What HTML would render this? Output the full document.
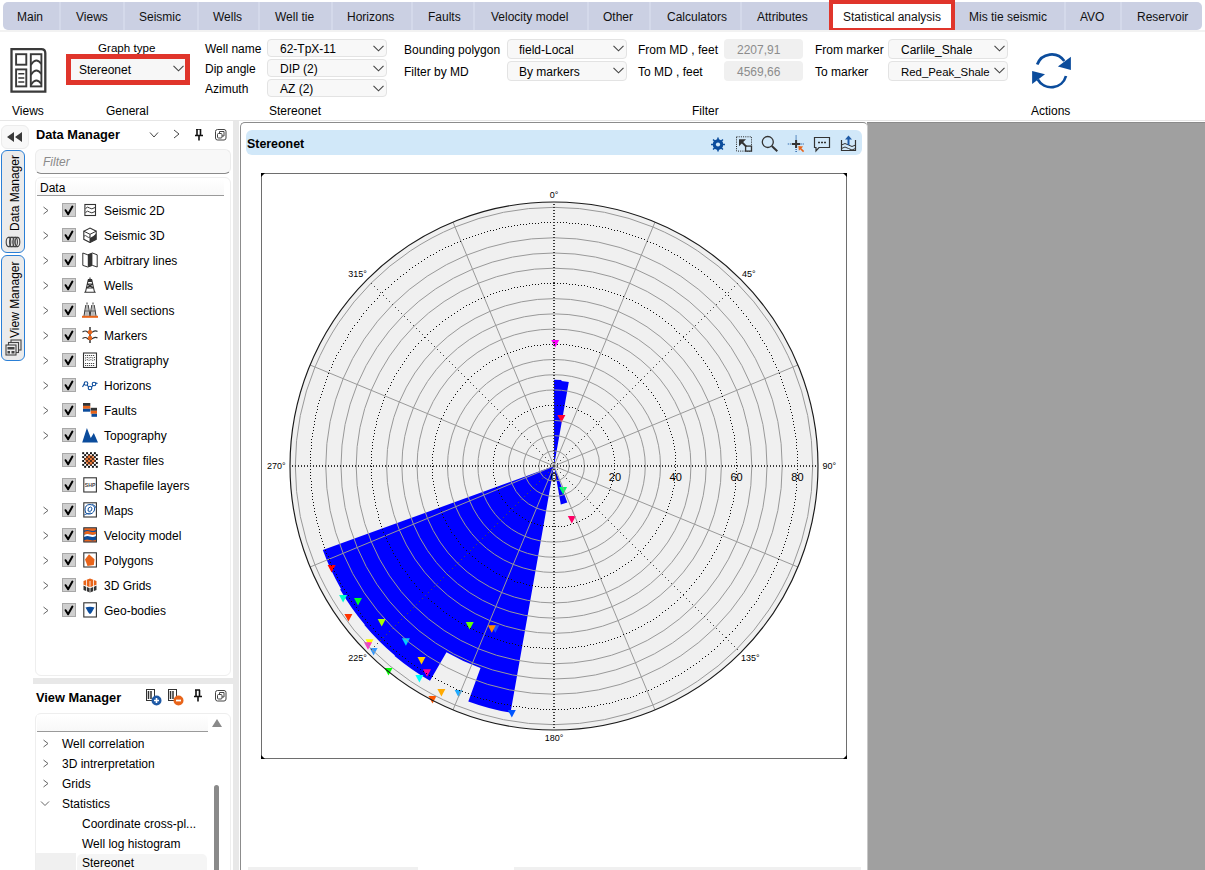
<!DOCTYPE html>
<html><head><meta charset="utf-8">
<style>
*{box-sizing:border-box}
body{margin:0;width:1205px;height:870px;position:relative;overflow:hidden;background:#fff;font-family:"Liberation Sans",sans-serif;font-size:12px;color:#000}
.a{position:absolute}
.t{position:absolute;white-space:nowrap;line-height:1}
.tabs{left:3px;top:2px;width:1199px;height:28px;background:#cbd0e3;border-radius:5px}
.sep{position:absolute;top:0;width:2px;height:28px;background:#d4d9ea}
.tab{position:absolute;top:10px;white-space:nowrap;line-height:14px;font-size:12px;color:#111}
.combo{position:absolute;background:#f8f8f8;border:1px solid #e3e3e3;border-radius:4px}
.combo .v{position:absolute;top:2px;line-height:14px;white-space:nowrap}
.chv{position:absolute}
.spin{position:absolute;background:#f0f0f0;border-radius:4px;color:#8c8c8c}
.lbl{position:absolute;white-space:nowrap;line-height:14px}
.row{position:absolute;height:20px}
.cb{position:absolute;width:14px;height:14px;background:#cfcfcf;border:1px solid #a8a8a8}
.cb svg{position:absolute;left:-1px;top:-1px}
.tc{position:absolute;width:6px;height:6px;border-right:1px solid #666;border-bottom:1px solid #666;transform:rotate(-45deg)}
</style></head><body>

<!-- TAB STRIP -->
<div class="a tabs">
  <div class="sep" style="left:56px"></div>
  <div class="sep" style="left:120px"></div>
  <div class="sep" style="left:194px"></div>
  <div class="sep" style="left:255px"></div>
  <div class="sep" style="left:328px"></div>
  <div class="sep" style="left:408px"></div>
  <div class="sep" style="left:470px"></div>
  <div class="sep" style="left:584px"></div>
  <div class="sep" style="left:646px"></div>
  <div class="sep" style="left:737px"></div>
  <div class="sep" style="left:1061px"></div>
  <div class="sep" style="left:1117px"></div>
</div>
<div class="tab" style="left:17px">Main</div>
<div class="tab" style="left:76px">Views</div>
<div class="tab" style="left:139px">Seismic</div>
<div class="tab" style="left:213px">Wells</div>
<div class="tab" style="left:275px">Well tie</div>
<div class="tab" style="left:347px">Horizons</div>
<div class="tab" style="left:428px">Faults</div>
<div class="tab" style="left:491px">Velocity model</div>
<div class="tab" style="left:603px">Other</div>
<div class="tab" style="left:667px">Calculators</div>
<div class="tab" style="left:757px">Attributes</div>
<div class="a" style="left:829px;top:0;width:126px;height:32px;background:#fff;border:4px solid #e0352b"></div>
<div class="tab" style="left:843px">Statistical analysis</div>
<div class="tab" style="left:969px">Mis tie seismic</div>
<div class="tab" style="left:1080px">AVO</div>
<div class="tab" style="left:1137px">Reservoir</div>

<!-- RIBBON -->

<div class="a" style="left:0;top:30px;width:1205px;height:2px;background:#f2f2f2"></div>
<!-- views icon -->
<svg class="a" style="left:9px;top:47px" width="39" height="47" viewBox="0 0 39 47">
 <path d="M2.5 2.1 H32.3 Q36.3 2.1 36.3 6.1 V44.6 H2.5 Z" fill="none" stroke="#3a3a3a" stroke-width="2.3"/>
 <rect x="7.1" y="7.2" width="10.2" height="10.5" fill="none" stroke="#3a3a3a" stroke-width="1.9"/>
 <rect x="7.1" y="22.4" width="10.2" height="17" fill="none" stroke="#3a3a3a" stroke-width="1.9"/>
 <path d="M9.3 26.8 h6 M9.3 30.9 h6 M9.3 35 h6" stroke="#3a3a3a" stroke-width="1.5"/>
 <rect x="21.8" y="7.2" width="10.6" height="32.2" fill="none" stroke="#3a3a3a" stroke-width="1.9"/>
 <path d="M21.8 18 Q27 9.5 32.4 17 M21.8 28 Q27 19.5 32.4 27 M21.8 38 Q27 29.5 32.4 37" fill="none" stroke="#3a3a3a" stroke-width="1.9"/>
</svg>
<div class="lbl" style="left:12px;top:104px">Views</div>
<div class="lbl" style="left:98px;top:41px;font-size:11.6px">Graph type</div>
<div class="a" style="left:66px;top:54px;width:124px;height:31px;border:5px solid #e0352b;background:#f7f7f7"></div>
<div class="lbl" style="left:79px;top:63px">Stereonet</div>
<svg class="chv" style="left:173px;top:65px" width="11" height="7" viewBox="0 0 11 7"><path d="M0.5 0.8 L5.5 5.8 L10.5 0.8" fill="none" stroke="#444" stroke-width="1.1"/></svg>
<div class="lbl" style="left:106px;top:104px">General</div>

<div class="lbl" style="left:205px;top:42px">Well name</div>
<div class="lbl" style="left:205px;top:62px">Dip angle</div>
<div class="lbl" style="left:205px;top:82px">Azimuth</div>
<div class="combo" style="left:267px;top:39px;width:120px;height:18px"><div class="v" style="left:12px;top:2px">62-TpX-11</div><svg class="chv" style="left:105px;top:5px" width="11" height="7" viewBox="0 0 11 7"><path d="M0.5 0.8 L5.5 5.8 L10.5 0.8" fill="none" stroke="#444" stroke-width="1.1"/></svg></div>
<div class="combo" style="left:267px;top:59px;width:120px;height:18px"><div class="v" style="left:12px;top:2px">DIP (2)</div><svg class="chv" style="left:105px;top:5px" width="11" height="7" viewBox="0 0 11 7"><path d="M0.5 0.8 L5.5 5.8 L10.5 0.8" fill="none" stroke="#444" stroke-width="1.1"/></svg></div>
<div class="combo" style="left:267px;top:79px;width:120px;height:18px"><div class="v" style="left:12px;top:2px">AZ (2)</div><svg class="chv" style="left:105px;top:5px" width="11" height="7" viewBox="0 0 11 7"><path d="M0.5 0.8 L5.5 5.8 L10.5 0.8" fill="none" stroke="#444" stroke-width="1.1"/></svg></div>
<div class="lbl" style="left:269px;top:104px">Stereonet</div>

<div class="lbl" style="left:404px;top:43px">Bounding polygon</div>
<div class="lbl" style="left:404px;top:65px">Filter by MD</div>
<div class="combo" style="left:507px;top:39px;width:120px;height:20px"><div class="v" style="left:11px;top:3px">field-Local</div><svg class="chv" style="left:105px;top:5px" width="11" height="7" viewBox="0 0 11 7"><path d="M0.5 0.8 L5.5 5.8 L10.5 0.8" fill="none" stroke="#444" stroke-width="1.1"/></svg></div>
<div class="combo" style="left:507px;top:61px;width:120px;height:20px"><div class="v" style="left:11px;top:3px">By markers</div><svg class="chv" style="left:105px;top:5px" width="11" height="7" viewBox="0 0 11 7"><path d="M0.5 0.8 L5.5 5.8 L10.5 0.8" fill="none" stroke="#444" stroke-width="1.1"/></svg></div>

<div class="lbl" style="left:638px;top:43px">From MD , feet</div>
<div class="lbl" style="left:638px;top:65px">To MD , feet</div>
<div class="spin" style="left:724px;top:39px;width:79px;height:20px"><div class="v lbl" style="left:13px;top:4px">2207,91</div></div>
<div class="spin" style="left:724px;top:61px;width:79px;height:20px"><div class="v lbl" style="left:13px;top:4px">4569,66</div></div>

<div class="lbl" style="left:815px;top:43px">From marker</div>
<div class="lbl" style="left:815px;top:65px">To marker</div>
<div class="combo" style="left:888px;top:39px;width:120px;height:20px"><div class="v" style="left:12px;top:3px">Carlile_Shale</div><svg class="chv" style="left:105px;top:5px" width="11" height="7" viewBox="0 0 11 7"><path d="M0.5 0.8 L5.5 5.8 L10.5 0.8" fill="none" stroke="#444" stroke-width="1.1"/></svg></div>
<div class="combo" style="left:888px;top:61px;width:120px;height:20px"><div class="v" style="left:12px;top:3px;font-size:11.4px">Red_Peak_Shale</div><svg class="chv" style="left:105px;top:5px" width="11" height="7" viewBox="0 0 11 7"><path d="M0.5 0.8 L5.5 5.8 L10.5 0.8" fill="none" stroke="#444" stroke-width="1.1"/></svg></div>
<div class="lbl" style="left:692px;top:104px">Filter</div>

<svg class="a" style="left:1020px;top:45px" width="60" height="50" viewBox="0 0 60 50">
 <path d="M17.2 19.5 A15.4 15.4 0 0 1 44.3 16.1" fill="none" stroke="#0b4c9c" stroke-width="2.7"/>
 <path d="M50.9 11.8 L50.9 25 L37.9 21.6 Z" fill="#0b4c9c"/>
 <path d="M46 31 A15.4 15.4 0 0 1 17.8 34.5" fill="none" stroke="#0b4c9c" stroke-width="2.7"/>
 <path d="M12.1 25.9 L12.1 39.1 L25 29.3 Z" fill="#0b4c9c"/>
</svg>
<div class="lbl" style="left:1031px;top:104px">Actions</div>
<div class="a" style="left:0;top:120px;width:1205px;height:1px;background:#e6e6e6"></div>


<!-- LEFT SIDE -->

<div class="a" style="left:1px;top:125px;width:28px;height:24px;background:#f8f8f8;border:1px solid #ececec;border-radius:6px"></div>
<svg class="a" style="left:6px;top:131px" width="18" height="12" viewBox="0 0 18 12"><path d="M1 6 L8 1 V11Z M9 6 L16 1 V11Z" fill="#3a3a3a"/></svg>
<div class="a" style="left:1px;top:150px;width:24px;height:103px;background:#ebebeb;border:1px solid #2a7fd6;border-radius:6px"></div>
<div class="t" style="left:9px;top:231px;transform-origin:0 0;transform:rotate(-90deg);font-size:12px;line-height:12px">Data Manager</div>
<svg class="a" style="left:5px;top:236px" width="16" height="12" viewBox="0 0 16 12"><g fill="none" stroke="#444" stroke-width="1.1"><ellipse cx="3.5" cy="6" rx="2.3" ry="4.6"/><ellipse cx="6.8" cy="6" rx="2.3" ry="4.6"/><ellipse cx="10.1" cy="6" rx="2.3" ry="4.6"/><path d="M3.5 1.4 H12.5 M3.5 10.6 H12.5"/><ellipse cx="12.5" cy="6" rx="2.3" ry="4.6"/></g></svg>
<div class="a" style="left:1px;top:255px;width:24px;height:106px;background:#ebebeb;border:1px solid #2a7fd6;border-radius:6px"></div>
<div class="t" style="left:9px;top:338px;transform-origin:0 0;transform:rotate(-90deg);font-size:12px;line-height:12px">View Manager</div>
<svg class="a" style="left:4px;top:339px" width="19" height="18" viewBox="0 0 19 18"><g fill="#ebebeb" stroke="#444" stroke-width="1.1"><rect x="7" y="1" width="10" height="10"/><rect x="4.5" y="3.5" width="10" height="10"/><rect x="2" y="6" width="10" height="10"/></g><path d="M3.5 8 H10.5 V10.5 H3.5Z" fill="#444"/><path d="M3.5 12 H6 V14.5 H3.5Z M7.5 12 H10.5 V14.5 H7.5Z" fill="#444"/></svg>

<div class="t" style="left:36px;top:128px;font-weight:bold;font-size:12.8px;line-height:14px">Data Manager</div>
<svg class="a" style="left:148px;top:129px" width="85" height="12" viewBox="0 0 85 12">
 <path d="M2 3.5 L6 8 L10 3.5" fill="none" stroke="#444" stroke-width="1"/>
 <path d="M26 1 L31 5 L26 9" fill="none" stroke="#444" stroke-width="1"/>
 <path d="M48 0 H53 M49 0 V6 M52.5 0 V6 M47 6.5 H55 M51 6.5 V11.5" fill="none" stroke="#111" stroke-width="1.6"/>
 <rect x="67.5" y="0.5" width="10.5" height="10.5" rx="2" fill="none" stroke="#444" stroke-width="1"/>
 <rect x="69.5" y="4.5" width="4.5" height="4.5" rx="1" fill="none" stroke="#444" stroke-width="1"/>
 <path d="M71.5 4.5 V2.5 H76 V7 H74" fill="none" stroke="#444" stroke-width="1"/>
</svg>
<div class="a" style="left:35px;top:149px;width:196px;height:25px;background:#f8f8f8;border:1px solid #ececec;border-bottom:1.5px solid #8a8a8a;border-radius:6px"></div>
<div class="t" style="left:43px;top:156px;font-style:italic;color:#8a8a8a">Filter</div>
<div class="a" style="left:35px;top:177px;width:196px;height:499px;background:#fff;border:1px solid #eeeeee;border-radius:6px"></div>
<div class="a" style="left:37px;top:179px;width:187px;height:17px;background:linear-gradient(#fff,#f8f8f8);border-bottom:1px solid #9a9a9a"></div>
<div class="t" style="left:40px;top:182px">Data</div>
<svg class="a" style="left:42px;top:206px" width="8" height="9" viewBox="0 0 8 9"><path d="M1.5 1 L6 4.5 L1.5 8" fill="none" stroke="#666" stroke-width="1"/></svg>
<div class="cb" style="left:62px;top:203px"><svg width="14" height="14" viewBox="0 0 14 14"><path d="M3.6 7.2 L6.1 11.3 L10.4 3.6" fill="none" stroke="#000" stroke-width="2" stroke-linecap="round" stroke-linejoin="round"/></svg></div>
<svg class="a" style="left:82px;top:202px" width="16" height="16" viewBox="0 0 16 16"><rect x="2.9" y="2.5" width="10.6" height="11" fill="#fff" stroke="#333" stroke-width="1.1"/><path d="M3.5 6.5 q2 -2.5 4 -0.5 t5.5 -0.5 M3.5 10.5 q2 -2.5 4 -0.5 t5.5 -0.5" fill="none" stroke="#333" stroke-width="1"/></svg>
<div class="t" style="left:104px;top:205px">Seismic 2D</div>
<svg class="a" style="left:42px;top:231px" width="8" height="9" viewBox="0 0 8 9"><path d="M1.5 1 L6 4.5 L1.5 8" fill="none" stroke="#666" stroke-width="1"/></svg>
<div class="cb" style="left:62px;top:228px"><svg width="14" height="14" viewBox="0 0 14 14"><path d="M3.6 7.2 L6.1 11.3 L10.4 3.6" fill="none" stroke="#000" stroke-width="2" stroke-linecap="round" stroke-linejoin="round"/></svg></div>
<svg class="a" style="left:82px;top:227px" width="16" height="16" viewBox="0 0 16 16"><path d="M1.8 4.2 L8 1 L14.2 4.2 V12.3 L8 15.5 L1.8 12.3 Z" fill="#fff" stroke="#333" stroke-width="1.1"/><path d="M1.8 4.2 L8 7.3 L14.2 4.2 M8 7.3 V15.5" fill="none" stroke="#333" stroke-width="1"/><path d="M8 11 q3 -1 6.2 -4.5 V12.3 L8 15.5Z" fill="#333"/><path d="M2 9 q2 -1 3 0.5 t3 0.5" fill="none" stroke="#333" stroke-width="0.9"/></svg>
<div class="t" style="left:104px;top:230px">Seismic 3D</div>
<svg class="a" style="left:42px;top:256px" width="8" height="9" viewBox="0 0 8 9"><path d="M1.5 1 L6 4.5 L1.5 8" fill="none" stroke="#666" stroke-width="1"/></svg>
<div class="cb" style="left:62px;top:253px"><svg width="14" height="14" viewBox="0 0 14 14"><path d="M3.6 7.2 L6.1 11.3 L10.4 3.6" fill="none" stroke="#000" stroke-width="2" stroke-linecap="round" stroke-linejoin="round"/></svg></div>
<svg class="a" style="left:82px;top:252px" width="16" height="16" viewBox="0 0 16 16"><path d="M0.8 1 L5.8 2.8 L10.4 1 L15.2 2.8 V15 L10.4 13.4 L5.8 15 L0.8 13.4 Z" fill="#fff" stroke="#333" stroke-width="1"/><path d="M5.8 2.8 L10.4 1 V13.4 L5.8 15 Z" fill="#333"/></svg>
<div class="t" style="left:104px;top:255px">Arbitrary lines</div>
<svg class="a" style="left:42px;top:281px" width="8" height="9" viewBox="0 0 8 9"><path d="M1.5 1 L6 4.5 L1.5 8" fill="none" stroke="#666" stroke-width="1"/></svg>
<div class="cb" style="left:62px;top:278px"><svg width="14" height="14" viewBox="0 0 14 14"><path d="M3.6 7.2 L6.1 11.3 L10.4 3.6" fill="none" stroke="#000" stroke-width="2" stroke-linecap="round" stroke-linejoin="round"/></svg></div>
<svg class="a" style="left:82px;top:277px" width="16" height="16" viewBox="0 0 16 16"><path d="M8 0.5 V2.5 M6 2.5 H10 M6.3 2.5 L3.5 15 M9.7 2.5 L12.5 15 M2.3 15.3 H13.7 M5.2 7 H10.8 M4.4 11 H11.6 M5.2 7 L11.6 11 M10.8 7 L4.4 11" fill="none" stroke="#333" stroke-width="1.1"/><rect x="6" y="3" width="4" height="2" fill="#333"/></svg>
<div class="t" style="left:104px;top:280px">Wells</div>
<svg class="a" style="left:42px;top:306px" width="8" height="9" viewBox="0 0 8 9"><path d="M1.5 1 L6 4.5 L1.5 8" fill="none" stroke="#666" stroke-width="1"/></svg>
<div class="cb" style="left:62px;top:303px"><svg width="14" height="14" viewBox="0 0 14 14"><path d="M3.6 7.2 L6.1 11.3 L10.4 3.6" fill="none" stroke="#000" stroke-width="2" stroke-linecap="round" stroke-linejoin="round"/></svg></div>
<svg class="a" style="left:82px;top:302px" width="16" height="16" viewBox="0 0 16 16"><path d="M5 0.5 V2.5 M3.8 3 L2 14 M6.2 3 L8 14 M11 0.5 V2.5 M9.8 3 L8 14 M12.2 3 L14 14 M2.7 9 H7.3 M8.7 9 H13.3" fill="none" stroke="#333" stroke-width="1"/><path d="M3.8 3 H6.2 L7 14 H3Z M9.8 3 H12.2 L13 14 H9Z" fill="#888" opacity="0.6"/><rect x="0" y="13.8" width="16" height="2" fill="#e8641a"/></svg>
<div class="t" style="left:104px;top:305px">Well sections</div>
<svg class="a" style="left:42px;top:331px" width="8" height="9" viewBox="0 0 8 9"><path d="M1.5 1 L6 4.5 L1.5 8" fill="none" stroke="#666" stroke-width="1"/></svg>
<div class="cb" style="left:62px;top:328px"><svg width="14" height="14" viewBox="0 0 14 14"><path d="M3.6 7.2 L6.1 11.3 L10.4 3.6" fill="none" stroke="#000" stroke-width="2" stroke-linecap="round" stroke-linejoin="round"/></svg></div>
<svg class="a" style="left:82px;top:327px" width="16" height="16" viewBox="0 0 16 16"><path d="M8 0 V16" stroke="#333" stroke-width="1.5"/><path d="M0.5 5 q3 -2 5 0 t5 0 t5 -0.5 M0.5 11.5 q3 -2 5 0 t5 0 t5 -0.5" fill="none" stroke="#333" stroke-width="1.1"/><circle cx="8" cy="5.2" r="2.2" fill="#e8641a"/><circle cx="8" cy="11" r="2.2" fill="#e8641a"/></svg>
<div class="t" style="left:104px;top:330px">Markers</div>
<svg class="a" style="left:42px;top:356px" width="8" height="9" viewBox="0 0 8 9"><path d="M1.5 1 L6 4.5 L1.5 8" fill="none" stroke="#666" stroke-width="1"/></svg>
<div class="cb" style="left:62px;top:353px"><svg width="14" height="14" viewBox="0 0 14 14"><path d="M3.6 7.2 L6.1 11.3 L10.4 3.6" fill="none" stroke="#000" stroke-width="2" stroke-linecap="round" stroke-linejoin="round"/></svg></div>
<svg class="a" style="left:82px;top:352px" width="16" height="16" viewBox="0 0 16 16"><rect x="1.5" y="1" width="13" height="14.5" fill="#fff" stroke="#333" stroke-width="1.1"/><path d="M3 3.5 h10 M3 6.2 l2 -1 l2 1 l2 -1 l2 1 l2 -1 M3 8.5 l2 -1 l2 1 l2 -1 l2 1 l2 -1 M3 11.5 h10 M3 13.5 h10" fill="none" stroke="#333" stroke-width="0.9" stroke-dasharray="1.2 0.8"/></svg>
<div class="t" style="left:104px;top:355px">Stratigraphy</div>
<svg class="a" style="left:42px;top:381px" width="8" height="9" viewBox="0 0 8 9"><path d="M1.5 1 L6 4.5 L1.5 8" fill="none" stroke="#666" stroke-width="1"/></svg>
<div class="cb" style="left:62px;top:378px"><svg width="14" height="14" viewBox="0 0 14 14"><path d="M3.6 7.2 L6.1 11.3 L10.4 3.6" fill="none" stroke="#000" stroke-width="2" stroke-linecap="round" stroke-linejoin="round"/></svg></div>
<svg class="a" style="left:82px;top:377px" width="16" height="16" viewBox="0 0 16 16"><path d="M0.5 10 Q3 4 5.5 8.5 Q8 13 10.5 9 Q13 5 15.5 6.5" fill="none" stroke="#0b4c9c" stroke-width="1.1"/><circle cx="4" cy="6.5" r="1.8" fill="#fff" stroke="#0b4c9c" stroke-width="1.1"/><circle cx="8" cy="11" r="1.8" fill="#fff" stroke="#0b4c9c" stroke-width="1.1"/><circle cx="12" cy="7" r="1.8" fill="#fff" stroke="#0b4c9c" stroke-width="1.1"/></svg>
<div class="t" style="left:104px;top:380px">Horizons</div>
<svg class="a" style="left:42px;top:406px" width="8" height="9" viewBox="0 0 8 9"><path d="M1.5 1 L6 4.5 L1.5 8" fill="none" stroke="#666" stroke-width="1"/></svg>
<div class="cb" style="left:62px;top:403px"><svg width="14" height="14" viewBox="0 0 14 14"><path d="M3.6 7.2 L6.1 11.3 L10.4 3.6" fill="none" stroke="#000" stroke-width="2" stroke-linecap="round" stroke-linejoin="round"/></svg></div>
<svg class="a" style="left:82px;top:402px" width="16" height="16" viewBox="0 0 16 16"><rect x="1" y="1" width="7.3" height="2.9" fill="#333"/><rect x="1" y="3.9" width="7.3" height="2.9" fill="#e8641a"/><rect x="1" y="6.8" width="7.3" height="2.9" fill="#0b4c9c"/><rect x="8.7" y="5.8" width="6.3" height="3" fill="#333"/><rect x="8.7" y="8.8" width="6.3" height="3" fill="#e8641a"/><rect x="9.5" y="11.8" width="5.5" height="3" fill="#0b4c9c"/></svg>
<div class="t" style="left:104px;top:405px">Faults</div>
<svg class="a" style="left:42px;top:431px" width="8" height="9" viewBox="0 0 8 9"><path d="M1.5 1 L6 4.5 L1.5 8" fill="none" stroke="#666" stroke-width="1"/></svg>
<div class="cb" style="left:62px;top:428px"><svg width="14" height="14" viewBox="0 0 14 14"><path d="M3.6 7.2 L6.1 11.3 L10.4 3.6" fill="none" stroke="#000" stroke-width="2" stroke-linecap="round" stroke-linejoin="round"/></svg></div>
<svg class="a" style="left:82px;top:427px" width="16" height="16" viewBox="0 0 16 16"><path d="M0.2 15.5 L4.9 1 L8.8 11 L11.8 6 L16 15.5 Z" fill="#0b4c9c"/></svg>
<div class="t" style="left:104px;top:430px">Topography</div>
<div class="cb" style="left:62px;top:453px"><svg width="14" height="14" viewBox="0 0 14 14"><path d="M3.6 7.2 L6.1 11.3 L10.4 3.6" fill="none" stroke="#000" stroke-width="2" stroke-linecap="round" stroke-linejoin="round"/></svg></div>
<svg class="a" style="left:82px;top:452px" width="16" height="16" viewBox="0 0 16 16"><path d="M0 0h1.6v1.6h-1.6zM3 0h1.6v1.6h-1.6zM6 0h1.6v1.6h-1.6zM9 0h1.6v1.6h-1.6zM12 0h1.6v1.6h-1.6zM15 0h1.6v1.6h-1.6zM0 3h1.6v1.6h-1.6zM3 3h1.6v1.6h-1.6zM6 3h1.6v1.6h-1.6zM9 3h1.6v1.6h-1.6zM12 3h1.6v1.6h-1.6zM15 3h1.6v1.6h-1.6zM0 6h1.6v1.6h-1.6zM3 6h1.6v1.6h-1.6zM6 6h1.6v1.6h-1.6zM9 6h1.6v1.6h-1.6zM12 6h1.6v1.6h-1.6zM15 6h1.6v1.6h-1.6zM0 9h1.6v1.6h-1.6zM3 9h1.6v1.6h-1.6zM6 9h1.6v1.6h-1.6zM9 9h1.6v1.6h-1.6zM12 9h1.6v1.6h-1.6zM15 9h1.6v1.6h-1.6zM0 12h1.6v1.6h-1.6zM3 12h1.6v1.6h-1.6zM6 12h1.6v1.6h-1.6zM9 12h1.6v1.6h-1.6zM12 12h1.6v1.6h-1.6zM15 12h1.6v1.6h-1.6zM0 15h1.6v1.6h-1.6zM3 15h1.6v1.6h-1.6zM6 15h1.6v1.6h-1.6zM9 15h1.6v1.6h-1.6zM12 15h1.6v1.6h-1.6zM15 15h1.6v1.6h-1.6z" fill="none"/><g fill="#111"><rect x="0.20" y="0.20" width="1.95" height="1.95"/><rect x="0.20" y="4.10" width="1.95" height="1.95"/><rect x="0.20" y="8.00" width="1.95" height="1.95"/><rect x="0.20" y="11.90" width="1.95" height="1.95"/><rect x="2.15" y="2.15" width="1.95" height="1.95"/><rect x="2.15" y="6.05" width="1.95" height="1.95"/><rect x="2.15" y="9.95" width="1.95" height="1.95"/><rect x="2.15" y="13.85" width="1.95" height="1.95"/><rect x="4.10" y="0.20" width="1.95" height="1.95"/><rect x="4.10" y="4.10" width="1.95" height="1.95"/><rect x="4.10" y="8.00" width="1.95" height="1.95"/><rect x="4.10" y="11.90" width="1.95" height="1.95"/><rect x="6.05" y="2.15" width="1.95" height="1.95"/><rect x="6.05" y="6.05" width="1.95" height="1.95"/><rect x="6.05" y="9.95" width="1.95" height="1.95"/><rect x="6.05" y="13.85" width="1.95" height="1.95"/><rect x="8.00" y="0.20" width="1.95" height="1.95"/><rect x="8.00" y="4.10" width="1.95" height="1.95"/><rect x="8.00" y="8.00" width="1.95" height="1.95"/><rect x="8.00" y="11.90" width="1.95" height="1.95"/><rect x="9.95" y="2.15" width="1.95" height="1.95"/><rect x="9.95" y="6.05" width="1.95" height="1.95"/><rect x="9.95" y="9.95" width="1.95" height="1.95"/><rect x="9.95" y="13.85" width="1.95" height="1.95"/><rect x="11.90" y="0.20" width="1.95" height="1.95"/><rect x="11.90" y="4.10" width="1.95" height="1.95"/><rect x="11.90" y="8.00" width="1.95" height="1.95"/><rect x="11.90" y="11.90" width="1.95" height="1.95"/><rect x="13.85" y="2.15" width="1.95" height="1.95"/><rect x="13.85" y="6.05" width="1.95" height="1.95"/><rect x="13.85" y="9.95" width="1.95" height="1.95"/><rect x="13.85" y="13.85" width="1.95" height="1.95"/></g><circle cx="8" cy="8" r="4.8" fill="#e8641a" opacity="0.85"/><g fill="#222" opacity="0.7"><rect x="4.10" y="4.10" width="1.95" height="1.95"/><rect x="4.10" y="8.00" width="1.95" height="1.95"/><rect x="6.05" y="6.05" width="1.95" height="1.95"/><rect x="6.05" y="9.95" width="1.95" height="1.95"/><rect x="8.00" y="4.10" width="1.95" height="1.95"/><rect x="8.00" y="8.00" width="1.95" height="1.95"/><rect x="9.95" y="6.05" width="1.95" height="1.95"/><rect x="9.95" y="9.95" width="1.95" height="1.95"/></g></svg>
<div class="t" style="left:104px;top:455px">Raster files</div>
<div class="cb" style="left:62px;top:478px"><svg width="14" height="14" viewBox="0 0 14 14"><path d="M3.6 7.2 L6.1 11.3 L10.4 3.6" fill="none" stroke="#000" stroke-width="2" stroke-linecap="round" stroke-linejoin="round"/></svg></div>
<svg class="a" style="left:82px;top:477px" width="16" height="16" viewBox="0 0 16 16"><rect x="1.8" y="0.8" width="12.6" height="14.2" fill="#fff" stroke="#333" stroke-width="1.1"/><text x="8.1" y="10.2" font-size="5.2" font-weight="bold" text-anchor="middle" font-family="Liberation Sans" fill="#444">SHP</text></svg>
<div class="t" style="left:104px;top:480px">Shapefile layers</div>
<svg class="a" style="left:42px;top:506px" width="8" height="9" viewBox="0 0 8 9"><path d="M1.5 1 L6 4.5 L1.5 8" fill="none" stroke="#666" stroke-width="1"/></svg>
<div class="cb" style="left:62px;top:503px"><svg width="14" height="14" viewBox="0 0 14 14"><path d="M3.6 7.2 L6.1 11.3 L10.4 3.6" fill="none" stroke="#000" stroke-width="2" stroke-linecap="round" stroke-linejoin="round"/></svg></div>
<svg class="a" style="left:82px;top:502px" width="16" height="16" viewBox="0 0 16 16"><rect x="1.8" y="0.8" width="12.6" height="14.2" fill="#fff" stroke="#333" stroke-width="1.1"/><path d="M3 8 Q3 2.5 8 2.5 Q13.5 3 12.5 8 Q11 12.5 6 12 Q3 12 3 8Z M6 9 Q5.5 5 8.5 5 Q11 5.5 9.5 8.5 Q8 10 6 9Z" fill="none" stroke="#0b4c9c" stroke-width="1"/><path d="M2 13 Q6 11 9 11 M10 2 Q14 4 14 6" fill="none" stroke="#0b4c9c" stroke-width="0.8"/></svg>
<div class="t" style="left:104px;top:505px">Maps</div>
<svg class="a" style="left:42px;top:531px" width="8" height="9" viewBox="0 0 8 9"><path d="M1.5 1 L6 4.5 L1.5 8" fill="none" stroke="#666" stroke-width="1"/></svg>
<div class="cb" style="left:62px;top:528px"><svg width="14" height="14" viewBox="0 0 14 14"><path d="M3.6 7.2 L6.1 11.3 L10.4 3.6" fill="none" stroke="#000" stroke-width="2" stroke-linecap="round" stroke-linejoin="round"/></svg></div>
<svg class="a" style="left:82px;top:527px" width="16" height="16" viewBox="0 0 16 16"><rect x="1.8" y="0.8" width="12.6" height="14.2" fill="#0b4c9c" stroke="#333" stroke-width="1.1"/><path d="M2.3 1.3 H13.9 V3 Q11 4.5 8 3.5 Q5 2.5 2.3 3.5Z" fill="#e8641a"/><path d="M2.3 5 Q5 3.5 8 4.5 Q11 5.5 13.9 4.5 V7 Q11 8.5 8 7.5 Q5 6.5 2.3 8Z" fill="#e8641a"/><path d="M2.3 8 Q5 6.5 8 7.5 Q11 8.5 13.9 7 V9 Q11 10.5 8 9.5 Q5 8.5 2.3 10Z" fill="#fff"/><path d="M2.3 13.2 Q5 12 8 13 Q11 14 13.9 12.8 V14.5 H2.3Z" fill="#e8641a"/></svg>
<div class="t" style="left:104px;top:530px">Velocity model</div>
<svg class="a" style="left:42px;top:556px" width="8" height="9" viewBox="0 0 8 9"><path d="M1.5 1 L6 4.5 L1.5 8" fill="none" stroke="#666" stroke-width="1"/></svg>
<div class="cb" style="left:62px;top:553px"><svg width="14" height="14" viewBox="0 0 14 14"><path d="M3.6 7.2 L6.1 11.3 L10.4 3.6" fill="none" stroke="#000" stroke-width="2" stroke-linecap="round" stroke-linejoin="round"/></svg></div>
<svg class="a" style="left:82px;top:552px" width="16" height="16" viewBox="0 0 16 16"><rect x="1.8" y="0.8" width="12.6" height="14.2" fill="#fff" stroke="#333" stroke-width="1.1"/><path d="M7 2.2 L12.5 7.2 L11.8 13 L5.5 14 L3 7.5 Z" fill="#e8641a"/></svg>
<div class="t" style="left:104px;top:555px">Polygons</div>
<svg class="a" style="left:42px;top:581px" width="8" height="9" viewBox="0 0 8 9"><path d="M1.5 1 L6 4.5 L1.5 8" fill="none" stroke="#666" stroke-width="1"/></svg>
<div class="cb" style="left:62px;top:578px"><svg width="14" height="14" viewBox="0 0 14 14"><path d="M3.6 7.2 L6.1 11.3 L10.4 3.6" fill="none" stroke="#000" stroke-width="2" stroke-linecap="round" stroke-linejoin="round"/></svg></div>
<svg class="a" style="left:82px;top:577px" width="16" height="16" viewBox="0 0 16 16"><path d="M1.5 4 L8 1.5 L14.5 4 V8 L8 10.5 L1.5 8 Z" fill="#e8641a"/><path d="M1.5 8.5 L8 11 L14.5 8.5 V13 L8 15.5 L1.5 13 Z" fill="#333"/><path d="M4.5 2.5 V15 M11.5 2.5 V15 M1.5 8.2 L8 10.8 L14.5 8.2 M8 4 V15.5" stroke="#fff" stroke-width="0.8" fill="none"/></svg>
<div class="t" style="left:104px;top:580px">3D Grids</div>
<svg class="a" style="left:42px;top:606px" width="8" height="9" viewBox="0 0 8 9"><path d="M1.5 1 L6 4.5 L1.5 8" fill="none" stroke="#666" stroke-width="1"/></svg>
<div class="cb" style="left:62px;top:603px"><svg width="14" height="14" viewBox="0 0 14 14"><path d="M3.6 7.2 L6.1 11.3 L10.4 3.6" fill="none" stroke="#000" stroke-width="2" stroke-linecap="round" stroke-linejoin="round"/></svg></div>
<svg class="a" style="left:82px;top:602px" width="16" height="16" viewBox="0 0 16 16"><rect x="1.8" y="0.8" width="12.6" height="14.2" fill="#fff" stroke="#333" stroke-width="1.1"/><path d="M3.5 5.5 Q8 4.2 12.5 5.5 Q11 8 10 10 Q8.5 12.5 7.5 11.8 Q6 10.5 5 8 Z" fill="#0b4c9c"/></svg>
<div class="t" style="left:104px;top:605px">Geo-bodies</div>

<div class="a" style="left:33px;top:678px;width:200px;height:6px;background:#e8e8e8"></div>
<div class="a" style="left:233px;top:121px;width:6px;height:749px;background:#e8e8e8"></div>
<div class="t" style="left:36px;top:691px;font-weight:bold;font-size:12.8px;line-height:14px">View Manager</div>
<svg class="a" style="left:145px;top:688px" width="85" height="18" viewBox="0 0 85 18">
 <g fill="#fff" stroke="#333" stroke-width="1"><rect x="1.5" y="1.5" width="8" height="11"/></g><path d="M3.5 3 V11 M6 3 V11" stroke="#333" stroke-width="1.5"/>
 <circle cx="11.5" cy="12.5" r="5" fill="#1f5aa6"/><path d="M9 12.5 H14 M11.5 10 V15" stroke="#fff" stroke-width="1.6"/>
 <g fill="#fff" stroke="#333" stroke-width="1"><rect x="23.5" y="1.5" width="8" height="11"/></g><path d="M25.5 3 V11 M28 3 V11" stroke="#333" stroke-width="1.5"/>
 <circle cx="33.5" cy="12.5" r="5" fill="#e8641a"/><path d="M31 12.5 H36" stroke="#fff" stroke-width="1.8"/>
 <path d="M50 2 H55 M51 2 V8 M54.5 2 V8 M49 8.5 H57 M53 8.5 V13.5" fill="none" stroke="#111" stroke-width="1.6"/>
 <rect x="70.5" y="2.5" width="10.5" height="10.5" rx="2" fill="none" stroke="#444" stroke-width="1"/>
 <rect x="72.5" y="6.5" width="4.5" height="4.5" rx="1" fill="none" stroke="#444" stroke-width="1"/>
 <path d="M74.5 6.5 V4.5 H79 V9 H77" fill="none" stroke="#444" stroke-width="1"/>
</svg>
<div class="a" style="left:35px;top:713px;width:196px;height:170px;background:#fff;border:1px solid #eeeeee;border-radius:6px"></div>
<div class="a" style="left:37px;top:715px;width:171px;height:17px;background:linear-gradient(#fff,#f8f8f8);border-bottom:1px solid #9a9a9a"></div>
<svg class="a" style="left:211px;top:718px" width="12" height="10" viewBox="0 0 12 10"><path d="M1 9 L6 1 L11 9Z" fill="#8a8a8a"/></svg>
<div class="a" style="left:214px;top:785px;width:5px;height:90px;background:#8a8a8a;border-radius:2.5px"></div>
<div class="a" style="left:36px;top:853px;width:40px;height:17px;background:#f0f0f0"></div>
<div class="a" style="left:77px;top:854px;width:130px;height:20px;background:#f5f5f5;border-radius:5px"></div>
<svg class="a" style="left:42px;top:739px" width="8" height="9" viewBox="0 0 8 9"><path d="M1.5 1 L6 4.5 L1.5 8" fill="none" stroke="#666" stroke-width="1"/></svg>
<div class="t" style="left:62px;top:738px">Well correlation</div>
<svg class="a" style="left:42px;top:759px" width="8" height="9" viewBox="0 0 8 9"><path d="M1.5 1 L6 4.5 L1.5 8" fill="none" stroke="#666" stroke-width="1"/></svg>
<div class="t" style="left:62px;top:758px">3D intrerpretation</div>
<svg class="a" style="left:42px;top:779px" width="8" height="9" viewBox="0 0 8 9"><path d="M1.5 1 L6 4.5 L1.5 8" fill="none" stroke="#666" stroke-width="1"/></svg>
<div class="t" style="left:62px;top:778px">Grids</div>
<svg class="a" style="left:40px;top:800px" width="10" height="7" viewBox="0 0 10 7"><path d="M1 1.5 L5 5.5 L9 1.5" fill="none" stroke="#666" stroke-width="1"/></svg>
<div class="t" style="left:62px;top:798px">Statistics</div>
<div class="t" style="left:82px;top:818px">Coordinate cross-pl...</div>
<div class="t" style="left:82px;top:838px">Well log histogram</div>
<div class="t" style="left:82px;top:857px">Stereonet</div>


<!-- VIEW PANEL -->
<div class="a" style="left:867px;top:122px;width:338px;height:748px;background:#a0a0a0;border-top:1px solid #8a8a8a"></div>
<div class="a" style="left:240px;top:122px;width:628px;height:760px;background:#fff;border:1px solid #8c8c8c;border-right-color:#c8c8c8;border-radius:5px 5px 0 0"></div>
<div class="a" style="left:246px;top:130px;width:616px;height:25px;background:#d1e8f9;border-radius:6px"></div>
<div class="t" style="left:247px;top:138px;font-weight:bold;font-size:12.4px;line-height:13px">Stereonet</div>
<svg class="a" style="left:700px;top:130px" width="162" height="25" viewBox="0 0 162 25">
 <g transform="translate(18 14.5)"><path d="M-0.86 -4.93 L-0.71 -6.96 L0.71 -6.96 L0.86 -4.93 L2.88 -4.09 L4.42 -5.43 L5.43 -4.42 L4.09 -2.88 L4.93 -0.86 L6.96 -0.71 L6.96 0.71 L4.93 0.86 L4.09 2.88 L5.43 4.42 L4.42 5.43 L2.88 4.09 L0.86 4.93 L0.71 6.96 L-0.71 6.96 L-0.86 4.93 L-2.88 4.09 L-4.42 5.43 L-5.43 4.42 L-4.09 2.88 L-4.93 0.86 L-6.96 0.71 L-6.96 -0.71 L-4.93 -0.86 L-4.09 -2.88 L-5.43 -4.42 L-4.42 -5.43 L-2.88 -4.09 Z" fill="#0b4c9c"/><circle r="5.2" fill="#0b4c9c"/><circle r="2.1" fill="#d1e8f9"/></g>
 <rect x="36.5" y="6.8" width="15" height="14.3" fill="none" stroke="#222" stroke-width="1" stroke-dasharray="1 1.2"/>
 <rect x="45.6" y="16.1" width="5.9" height="5" fill="#d1e8f9" stroke="#333" stroke-width="1.3"/>
 <path d="M39 9.3 L46 9.3 L39 16.3 Z" fill="#333"/>
 <path d="M41.5 11.8 L46.3 16.6" stroke="#333" stroke-width="2"/>
 <circle cx="67.8" cy="12" r="5.5" fill="none" stroke="#333" stroke-width="1.3"/>
 <path d="M71.8 16 L77.3 21.3" stroke="#333" stroke-width="2"/>
 <path d="M96.1 5.5 V10.5 M96.1 17 V22 M87.8 14 H91.3 M100.7 14 H104.2" stroke="#0b4c9c" stroke-width="1.2" stroke-dasharray="1 1"/>
 <path d="M96.1 10 V18 M91.8 14 H100.2" stroke="#333" stroke-width="2"/>
 <path d="M98.3 16 L103.2 16.6 L98.9 20.7 Z" fill="#e8641a"/>
 <path d="M100 18 L103.6 21.6" stroke="#e8641a" stroke-width="1.6"/>
 <path d="M114.5 7.5 H129.5 V17.5 H119 L116 21 V17.5 H114.5 Z" fill="none" stroke="#333" stroke-width="1.2"/>
 <path d="M118 12.5 h2 M121 12.5 h2 M124 12.5 h2" stroke="#333" stroke-width="1.6"/>
 <path d="M141.5 10 V20.5 H155.5 V10" fill="none" stroke="#333" stroke-width="1.2"/>
 <path d="M141.5 15 q3.5 -3 7 0 t7 0 M141.5 18.5 q3.5 -3 7 0 t7 0" fill="none" stroke="#333" stroke-width="1"/>
 <path d="M148.5 15 V9" stroke="#1f5aa6" stroke-width="2"/>
 <path d="M145 9.5 L148.5 5.5 L152 9.5 Z" fill="#1f5aa6"/>
</svg>
<svg class="a" style="left:0;top:0" width="1205" height="870" viewBox="0 0 1205 870">
<rect x="261.5" y="173.5" width="585" height="585" fill="#fff" stroke="#6e6e6e" stroke-width="1"/>
<path d="M261 173 h4 L261 177 Z" fill="#000"/>
<path d="M847 173 h-4 L847 177 Z" fill="#000"/>
<path d="M261 759 h4 L261 755 Z" fill="#000"/>
<path d="M847 759 h-4 L847 755 Z" fill="#000"/>
<circle cx="554.0" cy="466.0" r="264.0" fill="#f0f0f0"/>
<path d="M554.0 466.0 L510.5 712.7 A250.5 250.5 0 0 1 468.3 701.4 L480.5 668.0 A215.0 215.0 0 0 1 446.5 652.2 L430.0 680.8 A248.0 248.0 0 0 1 394.6 656.0 L394.9 655.6 A247.5 247.5 0 0 1 364.4 625.1 L364.8 624.8 A247.0 247.0 0 0 1 340.1 589.5 L341.0 589.0 A246.0 246.0 0 0 1 322.8 550.1 Z" fill="#0000ff"/>
<path d="M554.0 466.0 L554.0 379.8 A86.2 86.2 0 0 1 561.5 380.1 L561.4 381.1 A85.2 85.2 0 0 1 568.8 382.1 Z" fill="#0000ff"/>
<path d="M554.0 466.0 L567.3 502.6 A39.0 39.0 0 0 1 560.8 504.4 Z" fill="#0000ff"/>
<path d="M551.2 340.1 H559.2 L555.2 347.6 Z" fill="#ff00ff"/>
<path d="M557.4 415.1 H565.4 L561.4 422.6 Z" fill="#ff0033"/>
<path d="M559.1 487.1 H567.1 L563.1 494.6 Z" fill="#00ff66"/>
<path d="M567.8 516.0 H575.8 L571.8 523.5 Z" fill="#ff0066"/>
<path d="M327.6 565.0 H335.6 L331.6 572.5 Z" fill="#ff0000"/>
<path d="M339.1 595.0 H347.1 L343.1 602.5 Z" fill="#00ffcc"/>
<path d="M354.0 598.1 H362.0 L358.0 605.6 Z" fill="#00ff22"/>
<path d="M344.4 614.1 H352.4 L348.4 621.6 Z" fill="#ff3300"/>
<path d="M377.7 619.1 H385.7 L381.7 626.6 Z" fill="#aaff00"/>
<path d="M465.7 622.0 H473.7 L469.7 629.5 Z" fill="#66ff00"/>
<path d="M491.3 625.2 H499.3 L495.3 632.7 Z" fill="#1a4dff"/>
<path d="M487.8 625.2 H495.8 L491.8 632.7 Z" fill="#ff8800"/>
<path d="M401.9 638.2 H409.9 L405.9 645.7 Z" fill="#00ccff"/>
<path d="M365.5 639.3 H373.5 L369.5 646.8 Z" fill="#ffff00"/>
<path d="M364.0 642.2 H372.0 L368.0 649.7 Z" fill="#ff33cc"/>
<path d="M369.6 648.0 H377.6 L373.6 655.5 Z" fill="#3399ff"/>
<path d="M417.5 657.1 H425.5 L421.5 664.6 Z" fill="#ffcc00"/>
<path d="M423.0 669.2 H431.0 L427.0 676.7 Z" fill="#ff0099"/>
<path d="M415.4 675.0 H423.4 L419.4 682.5 Z" fill="#00ffff"/>
<path d="M384.5 668.0 H392.5 L388.5 675.5 Z" fill="#00ff00"/>
<path d="M437.4 689.1 H445.4 L441.4 696.6 Z" fill="#ffaa00"/>
<path d="M428.5 696.0 H436.5 L432.5 703.5 Z" fill="#ff5500"/>
<path d="M454.6 690.0 H462.6 L458.6 697.5 Z" fill="#1eaaff"/>
<path d="M507.8 709.9 H515.8 L511.8 717.4 Z" fill="#0055ff"/>
<g fill="none" stroke="#999999" stroke-width="1"><circle cx="554.0" cy="466.0" r="15.21"/><circle cx="554.0" cy="466.0" r="30.43"/><circle cx="554.0" cy="466.0" r="45.65"/><circle cx="554.0" cy="466.0" r="76.08"/><circle cx="554.0" cy="466.0" r="91.29"/><circle cx="554.0" cy="466.0" r="106.51"/><circle cx="554.0" cy="466.0" r="136.94"/><circle cx="554.0" cy="466.0" r="152.15"/><circle cx="554.0" cy="466.0" r="167.37"/><circle cx="554.0" cy="466.0" r="197.80"/><circle cx="554.0" cy="466.0" r="213.01"/><circle cx="554.0" cy="466.0" r="228.23"/><circle cx="554.0" cy="466.0" r="258.66"/>
<line x1="554.0" y1="466.0" x2="655.0" y2="222.1"/>
<line x1="554.0" y1="466.0" x2="797.9" y2="365.0"/>
<line x1="554.0" y1="466.0" x2="797.9" y2="567.0"/>
<line x1="554.0" y1="466.0" x2="655.0" y2="709.9"/>
<line x1="554.0" y1="466.0" x2="453.0" y2="709.9"/>
<line x1="554.0" y1="466.0" x2="310.1" y2="567.0"/>
<line x1="554.0" y1="466.0" x2="310.1" y2="365.0"/>
<line x1="554.0" y1="466.0" x2="453.0" y2="222.1"/>
</g>
<path d="M554 405h1v1h-1zM557 405h1v1h-1zM560 405h1v1h-1zM563 405h1v1h-1zM566 406h1v1h-1zM569 407h1v1h-1zM572 407h1v1h-1zM575 408h1v1h-1zM578 410h1v1h-1zM581 411h1v1h-1zM584 413h1v1h-1zM587 414h1v1h-1zM590 416h1v1h-1zM593 419h1v1h-1zM596 421h1v1h-1zM598 424h1v1h-1zM601 427h1v1h-1zM603 430h1v1h-1zM605 433h1v1h-1zM607 436h1v1h-1zM608 439h1v1h-1zM610 442h1v1h-1zM611 445h1v1h-1zM612 448h1v1h-1zM613 451h1v1h-1zM613 454h1v1h-1zM614 457h1v1h-1zM614 460h1v1h-1zM614 463h1v1h-1zM614 466h1v1h-1zM614 469h1v1h-1zM614 472h1v1h-1zM614 475h1v1h-1zM613 478h1v1h-1zM612 481h1v1h-1zM611 484h1v1h-1zM610 487h1v1h-1zM609 490h1v1h-1zM608 493h1v1h-1zM606 496h1v1h-1zM604 499h1v1h-1zM602 502h1v1h-1zM599 505h1v1h-1zM597 508h1v1h-1zM594 511h1v1h-1zM591 514h1v1h-1zM588 516h1v1h-1zM585 518h1v1h-1zM582 519h1v1h-1zM579 521h1v1h-1zM576 522h1v1h-1zM573 523h1v1h-1zM570 524h1v1h-1zM567 525h1v1h-1zM564 526h1v1h-1zM561 526h1v1h-1zM558 526h1v1h-1zM555 526h1v1h-1zM552 526h1v1h-1zM549 526h1v1h-1zM546 526h1v1h-1zM543 525h1v1h-1zM540 525h1v1h-1zM537 524h1v1h-1zM534 523h1v1h-1zM531 522h1v1h-1zM528 521h1v1h-1zM525 519h1v1h-1zM522 517h1v1h-1zM519 515h1v1h-1zM516 513h1v1h-1zM513 511h1v1h-1zM510 508h1v1h-1zM507 505h1v1h-1zM505 502h1v1h-1zM502 499h1v1h-1zM501 496h1v1h-1zM499 493h1v1h-1zM498 490h1v1h-1zM496 487h1v1h-1zM495 484h1v1h-1zM495 481h1v1h-1zM494 478h1v1h-1zM493 475h1v1h-1zM493 472h1v1h-1zM493 469h1v1h-1zM493 466h1v1h-1zM493 463h1v1h-1zM493 460h1v1h-1zM493 457h1v1h-1zM494 454h1v1h-1zM494 451h1v1h-1zM495 448h1v1h-1zM496 445h1v1h-1zM498 442h1v1h-1zM499 439h1v1h-1zM500 436h1v1h-1zM502 433h1v1h-1zM504 430h1v1h-1zM507 427h1v1h-1zM509 424h1v1h-1zM512 421h1v1h-1zM515 418h1v1h-1zM518 416h1v1h-1zM521 414h1v1h-1zM524 412h1v1h-1zM527 411h1v1h-1zM530 409h1v1h-1zM533 408h1v1h-1zM536 407h1v1h-1zM539 406h1v1h-1zM542 406h1v1h-1zM545 405h1v1h-1zM548 405h1v1h-1zM551 405h1v1h-1zM554 344h1v1h-1zM557 344h1v1h-1zM560 344h1v1h-1zM563 344h1v1h-1zM566 344h1v1h-1zM569 345h1v1h-1zM572 345h1v1h-1zM575 346h1v1h-1zM578 346h1v1h-1zM581 347h1v1h-1zM584 348h1v1h-1zM587 348h1v1h-1zM590 349h1v1h-1zM593 350h1v1h-1zM596 351h1v1h-1zM599 352h1v1h-1zM602 354h1v1h-1zM605 355h1v1h-1zM608 356h1v1h-1zM611 358h1v1h-1zM614 360h1v1h-1zM617 361h1v1h-1zM619 363h1v1h-1zM623 365h1v1h-1zM626 367h1v1h-1zM628 370h1v1h-1zM632 372h1v1h-1zM635 375h1v1h-1zM637 377h1v1h-1zM640 380h1v1h-1zM643 383h1v1h-1zM646 386h1v1h-1zM648 389h1v1h-1zM651 392h1v1h-1zM653 395h1v1h-1zM655 398h1v1h-1zM657 401h1v1h-1zM659 404h1v1h-1zM660 407h1v1h-1zM662 410h1v1h-1zM664 413h1v1h-1zM665 416h1v1h-1zM666 419h1v1h-1zM667 422h1v1h-1zM668 425h1v1h-1zM669 428h1v1h-1zM670 431h1v1h-1zM671 434h1v1h-1zM672 437h1v1h-1zM673 440h1v1h-1zM673 443h1v1h-1zM674 446h1v1h-1zM674 449h1v1h-1zM675 452h1v1h-1zM675 455h1v1h-1zM675 458h1v1h-1zM675 461h1v1h-1zM675 464h1v1h-1zM675 467h1v1h-1zM675 470h1v1h-1zM675 473h1v1h-1zM675 476h1v1h-1zM674 479h1v1h-1zM674 482h1v1h-1zM674 485h1v1h-1zM673 488h1v1h-1zM672 491h1v1h-1zM672 494h1v1h-1zM671 497h1v1h-1zM670 500h1v1h-1zM669 503h1v1h-1zM668 506h1v1h-1zM667 509h1v1h-1zM666 512h1v1h-1zM665 515h1v1h-1zM663 518h1v1h-1zM662 521h1v1h-1zM660 524h1v1h-1zM658 527h1v1h-1zM656 530h1v1h-1zM655 533h1v1h-1zM652 536h1v1h-1zM650 539h1v1h-1zM648 542h1v1h-1zM645 545h1v1h-1zM643 548h1v1h-1zM640 551h1v1h-1zM637 554h1v1h-1zM634 557h1v1h-1zM631 560h1v1h-1zM628 562h1v1h-1zM625 564h1v1h-1zM622 566h1v1h-1zM619 568h1v1h-1zM616 570h1v1h-1zM613 572h1v1h-1zM610 573h1v1h-1zM607 575h1v1h-1zM604 576h1v1h-1zM601 578h1v1h-1zM598 579h1v1h-1zM595 580h1v1h-1zM592 581h1v1h-1zM589 582h1v1h-1zM586 583h1v1h-1zM583 584h1v1h-1zM580 584h1v1h-1zM577 585h1v1h-1zM574 586h1v1h-1zM571 586h1v1h-1zM568 586h1v1h-1zM565 587h1v1h-1zM562 587h1v1h-1zM559 587h1v1h-1zM556 587h1v1h-1zM553 587h1v1h-1zM550 587h1v1h-1zM547 587h1v1h-1zM544 587h1v1h-1zM541 587h1v1h-1zM538 586h1v1h-1zM535 586h1v1h-1zM532 585h1v1h-1zM529 585h1v1h-1zM526 584h1v1h-1zM523 583h1v1h-1zM520 582h1v1h-1zM517 582h1v1h-1zM514 581h1v1h-1zM511 579h1v1h-1zM508 578h1v1h-1zM505 577h1v1h-1zM502 576h1v1h-1zM499 574h1v1h-1zM496 573h1v1h-1zM493 571h1v1h-1zM490 569h1v1h-1zM487 567h1v1h-1zM484 565h1v1h-1zM481 563h1v1h-1zM478 561h1v1h-1zM475 558h1v1h-1zM472 556h1v1h-1zM469 553h1v1h-1zM466 550h1v1h-1zM463 547h1v1h-1zM460 544h1v1h-1zM458 541h1v1h-1zM456 538h1v1h-1zM454 535h1v1h-1zM451 532h1v1h-1zM450 529h1v1h-1zM448 526h1v1h-1zM446 523h1v1h-1zM445 520h1v1h-1zM443 517h1v1h-1zM442 514h1v1h-1zM441 511h1v1h-1zM439 508h1v1h-1zM438 505h1v1h-1zM437 502h1v1h-1zM436 499h1v1h-1zM436 496h1v1h-1zM435 493h1v1h-1zM434 490h1v1h-1zM434 487h1v1h-1zM433 484h1v1h-1zM433 481h1v1h-1zM432 478h1v1h-1zM432 475h1v1h-1zM432 472h1v1h-1zM432 469h1v1h-1zM432 466h1v1h-1zM432 463h1v1h-1zM432 460h1v1h-1zM432 457h1v1h-1zM432 454h1v1h-1zM433 451h1v1h-1zM433 448h1v1h-1zM434 445h1v1h-1zM434 442h1v1h-1zM435 439h1v1h-1zM435 436h1v1h-1zM436 433h1v1h-1zM437 430h1v1h-1zM438 427h1v1h-1zM439 424h1v1h-1zM440 421h1v1h-1zM441 418h1v1h-1zM443 415h1v1h-1zM444 412h1v1h-1zM446 409h1v1h-1zM447 406h1v1h-1zM449 403h1v1h-1zM451 400h1v1h-1zM453 397h1v1h-1zM455 394h1v1h-1zM457 391h1v1h-1zM460 388h1v1h-1zM462 385h1v1h-1zM465 382h1v1h-1zM468 379h1v1h-1zM471 376h1v1h-1zM474 373h1v1h-1zM477 371h1v1h-1zM480 369h1v1h-1zM483 366h1v1h-1zM486 364h1v1h-1zM489 362h1v1h-1zM492 360h1v1h-1zM495 359h1v1h-1zM498 357h1v1h-1zM501 356h1v1h-1zM504 354h1v1h-1zM507 353h1v1h-1zM510 352h1v1h-1zM513 351h1v1h-1zM516 350h1v1h-1zM519 349h1v1h-1zM522 348h1v1h-1zM525 347h1v1h-1zM528 346h1v1h-1zM531 346h1v1h-1zM534 345h1v1h-1zM537 345h1v1h-1zM540 345h1v1h-1zM543 344h1v1h-1zM546 344h1v1h-1zM549 344h1v1h-1zM552 344h1v1h-1zM554 283h1v1h-1zM557 283h1v1h-1zM560 283h1v1h-1zM563 283h1v1h-1zM566 283h1v1h-1zM569 284h1v1h-1zM572 284h1v1h-1zM575 284h1v1h-1zM578 285h1v1h-1zM581 285h1v1h-1zM584 285h1v1h-1zM587 286h1v1h-1zM590 287h1v1h-1zM593 287h1v1h-1zM596 288h1v1h-1zM599 289h1v1h-1zM602 289h1v1h-1zM605 290h1v1h-1zM608 291h1v1h-1zM611 292h1v1h-1zM614 293h1v1h-1zM617 294h1v1h-1zM620 295h1v1h-1zM623 296h1v1h-1zM626 298h1v1h-1zM629 299h1v1h-1zM632 300h1v1h-1zM635 302h1v1h-1zM638 303h1v1h-1zM641 305h1v1h-1zM644 307h1v1h-1zM647 308h1v1h-1zM650 310h1v1h-1zM653 312h1v1h-1zM656 314h1v1h-1zM659 316h1v1h-1zM662 318h1v1h-1zM665 321h1v1h-1zM668 323h1v1h-1zM671 325h1v1h-1zM674 328h1v1h-1zM676 331h1v1h-1zM679 333h1v1h-1zM683 336h1v1h-1zM685 339h1v1h-1zM688 342h1v1h-1zM691 345h1v1h-1zM694 348h1v1h-1zM696 351h1v1h-1zM698 354h1v1h-1zM701 357h1v1h-1zM703 360h1v1h-1zM705 363h1v1h-1zM707 366h1v1h-1zM709 369h1v1h-1zM711 372h1v1h-1zM712 375h1v1h-1zM714 378h1v1h-1zM716 381h1v1h-1zM717 384h1v1h-1zM718 387h1v1h-1zM720 390h1v1h-1zM721 393h1v1h-1zM722 396h1v1h-1zM724 399h1v1h-1zM725 402h1v1h-1zM726 405h1v1h-1zM727 408h1v1h-1zM728 411h1v1h-1zM729 414h1v1h-1zM730 417h1v1h-1zM730 420h1v1h-1zM731 423h1v1h-1zM732 426h1v1h-1zM732 429h1v1h-1zM733 432h1v1h-1zM734 435h1v1h-1zM734 438h1v1h-1zM734 441h1v1h-1zM735 444h1v1h-1zM735 447h1v1h-1zM735 450h1v1h-1zM736 453h1v1h-1zM736 456h1v1h-1zM736 459h1v1h-1zM736 462h1v1h-1zM736 465h1v1h-1zM736 468h1v1h-1zM736 471h1v1h-1zM736 474h1v1h-1zM736 477h1v1h-1zM735 480h1v1h-1zM735 483h1v1h-1zM735 486h1v1h-1zM735 489h1v1h-1zM734 492h1v1h-1zM734 495h1v1h-1zM733 498h1v1h-1zM733 501h1v1h-1zM732 504h1v1h-1zM731 507h1v1h-1zM730 510h1v1h-1zM730 513h1v1h-1zM729 516h1v1h-1zM728 519h1v1h-1zM727 522h1v1h-1zM726 525h1v1h-1zM725 528h1v1h-1zM724 531h1v1h-1zM723 534h1v1h-1zM721 537h1v1h-1zM720 540h1v1h-1zM719 543h1v1h-1zM717 546h1v1h-1zM716 549h1v1h-1zM714 552h1v1h-1zM712 555h1v1h-1zM711 558h1v1h-1zM709 561h1v1h-1zM707 564h1v1h-1zM705 567h1v1h-1zM703 570h1v1h-1zM701 573h1v1h-1zM699 576h1v1h-1zM696 579h1v1h-1zM694 582h1v1h-1zM691 585h1v1h-1zM689 588h1v1h-1zM686 591h1v1h-1zM683 594h1v1h-1zM680 597h1v1h-1zM677 600h1v1h-1zM674 603h1v1h-1zM671 605h1v1h-1zM668 608h1v1h-1zM665 610h1v1h-1zM662 612h1v1h-1zM659 615h1v1h-1zM656 617h1v1h-1zM653 619h1v1h-1zM650 621h1v1h-1zM647 622h1v1h-1zM644 624h1v1h-1zM641 626h1v1h-1zM638 627h1v1h-1zM635 629h1v1h-1zM632 630h1v1h-1zM629 632h1v1h-1zM626 633h1v1h-1zM623 634h1v1h-1zM620 636h1v1h-1zM617 637h1v1h-1zM614 638h1v1h-1zM611 639h1v1h-1zM608 640h1v1h-1zM605 641h1v1h-1zM602 642h1v1h-1zM599 642h1v1h-1zM596 643h1v1h-1zM593 644h1v1h-1zM590 644h1v1h-1zM587 645h1v1h-1zM584 646h1v1h-1zM581 646h1v1h-1zM578 646h1v1h-1zM575 647h1v1h-1zM572 647h1v1h-1zM569 647h1v1h-1zM566 648h1v1h-1zM563 648h1v1h-1zM560 648h1v1h-1zM557 648h1v1h-1zM554 648h1v1h-1zM551 648h1v1h-1zM548 648h1v1h-1zM545 648h1v1h-1zM542 648h1v1h-1zM539 647h1v1h-1zM536 647h1v1h-1zM533 647h1v1h-1zM530 647h1v1h-1zM527 646h1v1h-1zM524 646h1v1h-1zM521 645h1v1h-1zM518 645h1v1h-1zM515 644h1v1h-1zM512 643h1v1h-1zM509 643h1v1h-1zM506 642h1v1h-1zM503 641h1v1h-1zM500 640h1v1h-1zM497 639h1v1h-1zM494 638h1v1h-1zM491 637h1v1h-1zM488 636h1v1h-1zM485 635h1v1h-1zM482 633h1v1h-1zM479 632h1v1h-1zM476 631h1v1h-1zM473 629h1v1h-1zM470 628h1v1h-1zM467 626h1v1h-1zM464 625h1v1h-1zM461 623h1v1h-1zM458 621h1v1h-1zM455 619h1v1h-1zM452 617h1v1h-1zM449 615h1v1h-1zM446 613h1v1h-1zM443 611h1v1h-1zM440 608h1v1h-1zM437 606h1v1h-1zM434 603h1v1h-1zM431 601h1v1h-1zM428 598h1v1h-1zM425 595h1v1h-1zM422 592h1v1h-1zM419 589h1v1h-1zM416 586h1v1h-1zM414 583h1v1h-1zM411 580h1v1h-1zM409 577h1v1h-1zM407 574h1v1h-1zM405 571h1v1h-1zM402 568h1v1h-1zM400 565h1v1h-1zM399 562h1v1h-1zM397 559h1v1h-1zM395 556h1v1h-1zM393 553h1v1h-1zM392 550h1v1h-1zM390 547h1v1h-1zM389 544h1v1h-1zM387 541h1v1h-1zM386 538h1v1h-1zM385 535h1v1h-1zM383 532h1v1h-1zM382 529h1v1h-1zM381 526h1v1h-1zM380 523h1v1h-1zM379 520h1v1h-1zM378 517h1v1h-1zM378 514h1v1h-1zM377 511h1v1h-1zM376 508h1v1h-1zM375 505h1v1h-1zM375 502h1v1h-1zM374 499h1v1h-1zM374 496h1v1h-1zM373 493h1v1h-1zM373 490h1v1h-1zM372 487h1v1h-1zM372 484h1v1h-1zM372 481h1v1h-1zM371 478h1v1h-1zM371 475h1v1h-1zM371 472h1v1h-1zM371 469h1v1h-1zM371 466h1v1h-1zM371 463h1v1h-1zM371 460h1v1h-1zM371 457h1v1h-1zM371 454h1v1h-1zM371 451h1v1h-1zM372 448h1v1h-1zM372 445h1v1h-1zM372 442h1v1h-1zM373 439h1v1h-1zM373 436h1v1h-1zM374 433h1v1h-1zM374 430h1v1h-1zM375 427h1v1h-1zM376 424h1v1h-1zM376 421h1v1h-1zM377 418h1v1h-1zM378 415h1v1h-1zM379 412h1v1h-1zM380 409h1v1h-1zM381 406h1v1h-1zM382 403h1v1h-1zM383 400h1v1h-1zM384 397h1v1h-1zM385 394h1v1h-1zM387 391h1v1h-1zM388 388h1v1h-1zM390 385h1v1h-1zM391 382h1v1h-1zM393 379h1v1h-1zM394 376h1v1h-1zM396 373h1v1h-1zM398 370h1v1h-1zM400 367h1v1h-1zM402 364h1v1h-1zM404 361h1v1h-1zM406 358h1v1h-1zM408 355h1v1h-1zM410 352h1v1h-1zM413 349h1v1h-1zM415 346h1v1h-1zM418 343h1v1h-1zM421 340h1v1h-1zM424 337h1v1h-1zM427 334h1v1h-1zM430 331h1v1h-1zM433 329h1v1h-1zM436 326h1v1h-1zM439 324h1v1h-1zM442 321h1v1h-1zM445 319h1v1h-1zM448 317h1v1h-1zM451 315h1v1h-1zM454 313h1v1h-1zM457 311h1v1h-1zM460 309h1v1h-1zM463 307h1v1h-1zM466 305h1v1h-1zM469 304h1v1h-1zM472 302h1v1h-1zM475 301h1v1h-1zM478 299h1v1h-1zM481 298h1v1h-1zM484 297h1v1h-1zM487 296h1v1h-1zM490 294h1v1h-1zM493 293h1v1h-1zM496 292h1v1h-1zM499 291h1v1h-1zM502 290h1v1h-1zM505 290h1v1h-1zM508 289h1v1h-1zM511 288h1v1h-1zM514 287h1v1h-1zM517 287h1v1h-1zM520 286h1v1h-1zM523 286h1v1h-1zM526 285h1v1h-1zM529 285h1v1h-1zM532 284h1v1h-1zM535 284h1v1h-1zM538 284h1v1h-1zM541 283h1v1h-1zM544 283h1v1h-1zM547 283h1v1h-1zM550 283h1v1h-1zM553 283h1v1h-1zM554 222h1v1h-1zM557 222h1v1h-1zM560 222h1v1h-1zM563 222h1v1h-1zM566 222h1v1h-1zM569 223h1v1h-1zM572 223h1v1h-1zM575 223h1v1h-1zM578 223h1v1h-1zM581 224h1v1h-1zM584 224h1v1h-1zM587 224h1v1h-1zM590 225h1v1h-1zM593 225h1v1h-1zM596 226h1v1h-1zM599 226h1v1h-1zM602 227h1v1h-1zM605 227h1v1h-1zM608 228h1v1h-1zM611 229h1v1h-1zM614 230h1v1h-1zM617 230h1v1h-1zM620 231h1v1h-1zM623 232h1v1h-1zM626 233h1v1h-1zM629 234h1v1h-1zM632 235h1v1h-1zM635 236h1v1h-1zM638 237h1v1h-1zM641 238h1v1h-1zM644 239h1v1h-1zM647 241h1v1h-1zM650 242h1v1h-1zM653 243h1v1h-1zM656 244h1v1h-1zM659 246h1v1h-1zM662 247h1v1h-1zM665 249h1v1h-1zM668 250h1v1h-1zM671 252h1v1h-1zM674 254h1v1h-1zM677 255h1v1h-1zM680 257h1v1h-1zM683 259h1v1h-1zM686 261h1v1h-1zM689 263h1v1h-1zM692 265h1v1h-1zM695 267h1v1h-1zM698 269h1v1h-1zM701 271h1v1h-1zM704 274h1v1h-1zM707 276h1v1h-1zM710 279h1v1h-1zM713 281h1v1h-1zM716 284h1v1h-1zM719 287h1v1h-1zM722 289h1v1h-1zM725 292h1v1h-1zM728 295h1v1h-1zM730 298h1v1h-1zM733 301h1v1h-1zM736 304h1v1h-1zM738 307h1v1h-1zM741 310h1v1h-1zM743 313h1v1h-1zM746 316h1v1h-1zM748 319h1v1h-1zM750 322h1v1h-1zM752 325h1v1h-1zM755 328h1v1h-1zM757 331h1v1h-1zM759 334h1v1h-1zM760 337h1v1h-1zM762 340h1v1h-1zM764 343h1v1h-1zM766 346h1v1h-1zM767 349h1v1h-1zM769 352h1v1h-1zM771 355h1v1h-1zM772 358h1v1h-1zM773 361h1v1h-1zM775 364h1v1h-1zM776 367h1v1h-1zM778 370h1v1h-1zM779 373h1v1h-1zM780 376h1v1h-1zM781 379h1v1h-1zM782 382h1v1h-1zM783 385h1v1h-1zM784 388h1v1h-1zM785 391h1v1h-1zM786 394h1v1h-1zM787 397h1v1h-1zM788 400h1v1h-1zM789 403h1v1h-1zM790 406h1v1h-1zM790 409h1v1h-1zM791 412h1v1h-1zM792 415h1v1h-1zM792 418h1v1h-1zM793 421h1v1h-1zM793 424h1v1h-1zM794 427h1v1h-1zM794 430h1v1h-1zM795 433h1v1h-1zM795 436h1v1h-1zM796 439h1v1h-1zM796 442h1v1h-1zM796 445h1v1h-1zM796 448h1v1h-1zM797 451h1v1h-1zM797 454h1v1h-1zM797 457h1v1h-1zM797 460h1v1h-1zM797 463h1v1h-1zM797 466h1v1h-1zM797 469h1v1h-1zM797 472h1v1h-1zM797 475h1v1h-1zM797 478h1v1h-1zM796 481h1v1h-1zM796 484h1v1h-1zM796 487h1v1h-1zM796 490h1v1h-1zM795 493h1v1h-1zM795 496h1v1h-1zM795 499h1v1h-1zM794 502h1v1h-1zM794 505h1v1h-1zM793 508h1v1h-1zM793 511h1v1h-1zM792 514h1v1h-1zM791 517h1v1h-1zM791 520h1v1h-1zM790 523h1v1h-1zM789 526h1v1h-1zM788 529h1v1h-1zM788 532h1v1h-1zM787 535h1v1h-1zM786 538h1v1h-1zM785 541h1v1h-1zM784 544h1v1h-1zM783 547h1v1h-1zM782 550h1v1h-1zM781 553h1v1h-1zM779 556h1v1h-1zM778 559h1v1h-1zM777 562h1v1h-1zM776 565h1v1h-1zM774 568h1v1h-1zM773 571h1v1h-1zM771 574h1v1h-1zM770 577h1v1h-1zM768 580h1v1h-1zM767 583h1v1h-1zM765 586h1v1h-1zM763 589h1v1h-1zM761 592h1v1h-1zM759 595h1v1h-1zM758 598h1v1h-1zM756 601h1v1h-1zM754 604h1v1h-1zM751 607h1v1h-1zM749 610h1v1h-1zM747 613h1v1h-1zM745 616h1v1h-1zM742 619h1v1h-1zM740 622h1v1h-1zM737 625h1v1h-1zM735 628h1v1h-1zM732 631h1v1h-1zM729 634h1v1h-1zM726 637h1v1h-1zM723 640h1v1h-1zM720 643h1v1h-1zM717 646h1v1h-1zM714 649h1v1h-1zM711 651h1v1h-1zM708 654h1v1h-1zM705 656h1v1h-1zM702 658h1v1h-1zM699 661h1v1h-1zM696 663h1v1h-1zM693 665h1v1h-1zM690 667h1v1h-1zM687 669h1v1h-1zM684 671h1v1h-1zM681 673h1v1h-1zM678 675h1v1h-1zM675 676h1v1h-1zM672 678h1v1h-1zM669 680h1v1h-1zM666 681h1v1h-1zM663 683h1v1h-1zM660 684h1v1h-1zM657 686h1v1h-1zM654 687h1v1h-1zM651 689h1v1h-1zM648 690h1v1h-1zM645 691h1v1h-1zM642 692h1v1h-1zM639 693h1v1h-1zM636 695h1v1h-1zM633 696h1v1h-1zM630 697h1v1h-1zM627 698h1v1h-1zM624 698h1v1h-1zM621 699h1v1h-1zM618 700h1v1h-1zM615 701h1v1h-1zM612 702h1v1h-1zM609 703h1v1h-1zM606 703h1v1h-1zM603 704h1v1h-1zM600 704h1v1h-1zM597 705h1v1h-1zM594 706h1v1h-1zM591 706h1v1h-1zM588 706h1v1h-1zM585 707h1v1h-1zM582 707h1v1h-1zM579 708h1v1h-1zM576 708h1v1h-1zM573 708h1v1h-1zM570 708h1v1h-1zM567 709h1v1h-1zM564 709h1v1h-1zM561 709h1v1h-1zM558 709h1v1h-1zM555 709h1v1h-1zM552 709h1v1h-1zM549 709h1v1h-1zM546 709h1v1h-1zM543 709h1v1h-1zM540 709h1v1h-1zM537 708h1v1h-1zM534 708h1v1h-1zM531 708h1v1h-1zM528 708h1v1h-1zM525 707h1v1h-1zM522 707h1v1h-1zM519 706h1v1h-1zM516 706h1v1h-1zM513 706h1v1h-1zM510 705h1v1h-1zM507 704h1v1h-1zM504 704h1v1h-1zM501 703h1v1h-1zM498 703h1v1h-1zM495 702h1v1h-1zM492 701h1v1h-1zM489 700h1v1h-1zM486 699h1v1h-1zM483 699h1v1h-1zM480 698h1v1h-1zM477 697h1v1h-1zM474 696h1v1h-1zM471 695h1v1h-1zM468 693h1v1h-1zM465 692h1v1h-1zM462 691h1v1h-1zM459 690h1v1h-1zM456 689h1v1h-1zM453 687h1v1h-1zM450 686h1v1h-1zM447 684h1v1h-1zM444 683h1v1h-1zM441 681h1v1h-1zM438 680h1v1h-1zM435 678h1v1h-1zM432 676h1v1h-1zM429 675h1v1h-1zM426 673h1v1h-1zM423 671h1v1h-1zM420 669h1v1h-1zM417 667h1v1h-1zM414 665h1v1h-1zM411 663h1v1h-1zM408 661h1v1h-1zM405 658h1v1h-1zM402 656h1v1h-1zM399 654h1v1h-1zM396 651h1v1h-1zM393 649h1v1h-1zM390 646h1v1h-1zM387 643h1v1h-1zM384 640h1v1h-1zM381 637h1v1h-1zM378 634h1v1h-1zM375 631h1v1h-1zM373 628h1v1h-1zM370 625h1v1h-1zM367 622h1v1h-1zM365 619h1v1h-1zM362 616h1v1h-1zM360 613h1v1h-1zM358 610h1v1h-1zM356 607h1v1h-1zM354 604h1v1h-1zM351 601h1v1h-1zM349 598h1v1h-1zM348 595h1v1h-1zM346 592h1v1h-1zM344 589h1v1h-1zM342 586h1v1h-1zM340 583h1v1h-1zM339 580h1v1h-1zM337 577h1v1h-1zM336 574h1v1h-1zM334 571h1v1h-1zM333 568h1v1h-1zM331 565h1v1h-1zM330 562h1v1h-1zM329 559h1v1h-1zM328 556h1v1h-1zM326 553h1v1h-1zM325 550h1v1h-1zM324 547h1v1h-1zM323 544h1v1h-1zM322 541h1v1h-1zM321 538h1v1h-1zM320 535h1v1h-1zM319 532h1v1h-1zM319 529h1v1h-1zM318 526h1v1h-1zM317 523h1v1h-1zM316 520h1v1h-1zM316 517h1v1h-1zM315 514h1v1h-1zM314 511h1v1h-1zM314 508h1v1h-1zM313 505h1v1h-1zM313 502h1v1h-1zM312 499h1v1h-1zM312 496h1v1h-1zM312 493h1v1h-1zM311 490h1v1h-1zM311 487h1v1h-1zM311 484h1v1h-1zM311 481h1v1h-1zM310 478h1v1h-1zM310 475h1v1h-1zM310 472h1v1h-1zM310 469h1v1h-1zM310 466h1v1h-1zM310 463h1v1h-1zM310 460h1v1h-1zM310 457h1v1h-1zM310 454h1v1h-1zM310 451h1v1h-1zM311 448h1v1h-1zM311 445h1v1h-1zM311 442h1v1h-1zM311 439h1v1h-1zM312 436h1v1h-1zM312 433h1v1h-1zM313 430h1v1h-1zM313 427h1v1h-1zM314 424h1v1h-1zM314 421h1v1h-1zM315 418h1v1h-1zM315 415h1v1h-1zM316 412h1v1h-1zM317 409h1v1h-1zM317 406h1v1h-1zM318 403h1v1h-1zM319 400h1v1h-1zM320 397h1v1h-1zM321 394h1v1h-1zM322 391h1v1h-1zM323 388h1v1h-1zM324 385h1v1h-1zM325 382h1v1h-1zM326 379h1v1h-1zM327 376h1v1h-1zM328 373h1v1h-1zM329 370h1v1h-1zM331 367h1v1h-1zM332 364h1v1h-1zM333 361h1v1h-1zM335 358h1v1h-1zM336 355h1v1h-1zM338 352h1v1h-1zM340 349h1v1h-1zM341 346h1v1h-1zM343 343h1v1h-1zM345 340h1v1h-1zM347 337h1v1h-1zM348 334h1v1h-1zM350 331h1v1h-1zM352 328h1v1h-1zM354 325h1v1h-1zM357 322h1v1h-1zM359 319h1v1h-1zM361 316h1v1h-1zM363 313h1v1h-1zM366 310h1v1h-1zM368 307h1v1h-1zM371 304h1v1h-1zM374 301h1v1h-1zM377 298h1v1h-1zM379 295h1v1h-1zM382 292h1v1h-1zM385 289h1v1h-1zM388 287h1v1h-1zM391 284h1v1h-1zM394 281h1v1h-1zM397 279h1v1h-1zM400 276h1v1h-1zM403 274h1v1h-1zM406 272h1v1h-1zM409 269h1v1h-1zM412 267h1v1h-1zM415 265h1v1h-1zM418 263h1v1h-1zM421 261h1v1h-1zM424 259h1v1h-1zM427 257h1v1h-1zM430 255h1v1h-1zM433 254h1v1h-1zM436 252h1v1h-1zM439 250h1v1h-1zM442 249h1v1h-1zM445 247h1v1h-1zM448 246h1v1h-1zM451 245h1v1h-1zM454 243h1v1h-1zM457 242h1v1h-1zM460 241h1v1h-1zM463 239h1v1h-1zM466 238h1v1h-1zM469 237h1v1h-1zM472 236h1v1h-1zM475 235h1v1h-1zM478 234h1v1h-1zM481 233h1v1h-1zM484 232h1v1h-1zM487 231h1v1h-1zM490 230h1v1h-1zM493 230h1v1h-1zM496 229h1v1h-1zM499 228h1v1h-1zM502 227h1v1h-1zM505 227h1v1h-1zM508 226h1v1h-1zM511 226h1v1h-1zM514 225h1v1h-1zM517 225h1v1h-1zM520 224h1v1h-1zM523 224h1v1h-1zM526 224h1v1h-1zM529 223h1v1h-1zM532 223h1v1h-1zM535 223h1v1h-1zM538 223h1v1h-1zM541 222h1v1h-1zM544 222h1v1h-1zM547 222h1v1h-1zM550 222h1v1h-1zM553 222h1v1h-1z" fill="#111"/>
<path d="M553 465h2v1h-2zM553 462h2v1h-2zM553 459h2v1h-2zM553 456h2v1h-2zM553 453h2v1h-2zM553 450h2v1h-2zM553 447h2v1h-2zM553 444h2v1h-2zM553 441h2v1h-2zM553 438h2v1h-2zM553 435h2v1h-2zM553 432h2v1h-2zM553 429h2v1h-2zM553 426h2v1h-2zM553 423h2v1h-2zM553 420h2v1h-2zM553 417h2v1h-2zM553 414h2v1h-2zM553 411h2v1h-2zM553 408h2v1h-2zM553 405h2v1h-2zM553 402h2v1h-2zM553 399h2v1h-2zM553 396h2v1h-2zM553 393h2v1h-2zM553 390h2v1h-2zM553 387h2v1h-2zM553 384h2v1h-2zM553 381h2v1h-2zM553 378h2v1h-2zM553 375h2v1h-2zM553 372h2v1h-2zM553 369h2v1h-2zM553 366h2v1h-2zM553 363h2v1h-2zM553 360h2v1h-2zM553 357h2v1h-2zM553 354h2v1h-2zM553 351h2v1h-2zM553 348h2v1h-2zM553 345h2v1h-2zM553 342h2v1h-2zM553 339h2v1h-2zM553 336h2v1h-2zM553 333h2v1h-2zM553 330h2v1h-2zM553 327h2v1h-2zM553 324h2v1h-2zM553 321h2v1h-2zM553 318h2v1h-2zM553 315h2v1h-2zM553 312h2v1h-2zM553 309h2v1h-2zM553 306h2v1h-2zM553 303h2v1h-2zM553 300h2v1h-2zM553 297h2v1h-2zM553 294h2v1h-2zM553 291h2v1h-2zM553 288h2v1h-2zM553 285h2v1h-2zM553 282h2v1h-2zM553 279h2v1h-2zM553 276h2v1h-2zM553 273h2v1h-2zM553 270h2v1h-2zM553 267h2v1h-2zM553 264h2v1h-2zM553 261h2v1h-2zM553 258h2v1h-2zM553 255h2v1h-2zM553 252h2v1h-2zM553 249h2v1h-2zM553 246h2v1h-2zM553 243h2v1h-2zM553 240h2v1h-2zM553 237h2v1h-2zM553 234h2v1h-2zM553 231h2v1h-2zM553 228h2v1h-2zM553 225h2v1h-2zM553 222h2v1h-2zM553 219h2v1h-2zM553 216h2v1h-2zM553 213h2v1h-2zM553 210h2v1h-2zM553 207h2v1h-2zM553 204h2v1h-2zM554 465h1v2h-1zM557 465h1v2h-1zM560 465h1v2h-1zM563 465h1v2h-1zM566 465h1v2h-1zM569 465h1v2h-1zM572 465h1v2h-1zM575 465h1v2h-1zM578 465h1v2h-1zM581 465h1v2h-1zM584 465h1v2h-1zM587 465h1v2h-1zM590 465h1v2h-1zM593 465h1v2h-1zM596 465h1v2h-1zM599 465h1v2h-1zM602 465h1v2h-1zM605 465h1v2h-1zM608 465h1v2h-1zM611 465h1v2h-1zM614 465h1v2h-1zM617 465h1v2h-1zM620 465h1v2h-1zM623 465h1v2h-1zM626 465h1v2h-1zM629 465h1v2h-1zM632 465h1v2h-1zM635 465h1v2h-1zM638 465h1v2h-1zM641 465h1v2h-1zM644 465h1v2h-1zM647 465h1v2h-1zM650 465h1v2h-1zM653 465h1v2h-1zM656 465h1v2h-1zM659 465h1v2h-1zM662 465h1v2h-1zM665 465h1v2h-1zM668 465h1v2h-1zM671 465h1v2h-1zM674 465h1v2h-1zM677 465h1v2h-1zM680 465h1v2h-1zM683 465h1v2h-1zM686 465h1v2h-1zM689 465h1v2h-1zM692 465h1v2h-1zM695 465h1v2h-1zM698 465h1v2h-1zM701 465h1v2h-1zM704 465h1v2h-1zM707 465h1v2h-1zM710 465h1v2h-1zM713 465h1v2h-1zM716 465h1v2h-1zM719 465h1v2h-1zM722 465h1v2h-1zM725 465h1v2h-1zM728 465h1v2h-1zM731 465h1v2h-1zM734 465h1v2h-1zM737 465h1v2h-1zM740 465h1v2h-1zM743 465h1v2h-1zM746 465h1v2h-1zM749 465h1v2h-1zM752 465h1v2h-1zM755 465h1v2h-1zM758 465h1v2h-1zM761 465h1v2h-1zM764 465h1v2h-1zM767 465h1v2h-1zM770 465h1v2h-1zM773 465h1v2h-1zM776 465h1v2h-1zM779 465h1v2h-1zM782 465h1v2h-1zM785 465h1v2h-1zM788 465h1v2h-1zM791 465h1v2h-1zM794 465h1v2h-1zM797 465h1v2h-1zM800 465h1v2h-1zM803 465h1v2h-1zM806 465h1v2h-1zM809 465h1v2h-1zM812 465h1v2h-1zM815 465h1v2h-1zM553 466h2v1h-2zM553 469h2v1h-2zM553 472h2v1h-2zM553 475h2v1h-2zM553 478h2v1h-2zM553 481h2v1h-2zM553 484h2v1h-2zM553 487h2v1h-2zM553 490h2v1h-2zM553 493h2v1h-2zM553 496h2v1h-2zM553 499h2v1h-2zM553 502h2v1h-2zM553 505h2v1h-2zM553 508h2v1h-2zM553 511h2v1h-2zM553 514h2v1h-2zM553 517h2v1h-2zM553 520h2v1h-2zM553 523h2v1h-2zM553 526h2v1h-2zM553 529h2v1h-2zM553 532h2v1h-2zM553 535h2v1h-2zM553 538h2v1h-2zM553 541h2v1h-2zM553 544h2v1h-2zM553 547h2v1h-2zM553 550h2v1h-2zM553 553h2v1h-2zM553 556h2v1h-2zM553 559h2v1h-2zM553 562h2v1h-2zM553 565h2v1h-2zM553 568h2v1h-2zM553 571h2v1h-2zM553 574h2v1h-2zM553 577h2v1h-2zM553 580h2v1h-2zM553 583h2v1h-2zM553 586h2v1h-2zM553 589h2v1h-2zM553 592h2v1h-2zM553 595h2v1h-2zM553 598h2v1h-2zM553 601h2v1h-2zM553 604h2v1h-2zM553 607h2v1h-2zM553 610h2v1h-2zM553 613h2v1h-2zM553 616h2v1h-2zM553 619h2v1h-2zM553 622h2v1h-2zM553 625h2v1h-2zM553 628h2v1h-2zM553 631h2v1h-2zM553 634h2v1h-2zM553 637h2v1h-2zM553 640h2v1h-2zM553 643h2v1h-2zM553 646h2v1h-2zM553 649h2v1h-2zM553 652h2v1h-2zM553 655h2v1h-2zM553 658h2v1h-2zM553 661h2v1h-2zM553 664h2v1h-2zM553 667h2v1h-2zM553 670h2v1h-2zM553 673h2v1h-2zM553 676h2v1h-2zM553 679h2v1h-2zM553 682h2v1h-2zM553 685h2v1h-2zM553 688h2v1h-2zM553 691h2v1h-2zM553 694h2v1h-2zM553 697h2v1h-2zM553 700h2v1h-2zM553 703h2v1h-2zM553 706h2v1h-2zM553 709h2v1h-2zM553 712h2v1h-2zM553 715h2v1h-2zM553 718h2v1h-2zM553 721h2v1h-2zM553 724h2v1h-2zM553 727h2v1h-2zM553 465h1v2h-1zM550 465h1v2h-1zM547 465h1v2h-1zM544 465h1v2h-1zM541 465h1v2h-1zM538 465h1v2h-1zM535 465h1v2h-1zM532 465h1v2h-1zM529 465h1v2h-1zM526 465h1v2h-1zM523 465h1v2h-1zM520 465h1v2h-1zM517 465h1v2h-1zM514 465h1v2h-1zM511 465h1v2h-1zM508 465h1v2h-1zM505 465h1v2h-1zM502 465h1v2h-1zM499 465h1v2h-1zM496 465h1v2h-1zM493 465h1v2h-1zM490 465h1v2h-1zM487 465h1v2h-1zM484 465h1v2h-1zM481 465h1v2h-1zM478 465h1v2h-1zM475 465h1v2h-1zM472 465h1v2h-1zM469 465h1v2h-1zM466 465h1v2h-1zM463 465h1v2h-1zM460 465h1v2h-1zM457 465h1v2h-1zM454 465h1v2h-1zM451 465h1v2h-1zM448 465h1v2h-1zM445 465h1v2h-1zM442 465h1v2h-1zM439 465h1v2h-1zM436 465h1v2h-1zM433 465h1v2h-1zM430 465h1v2h-1zM427 465h1v2h-1zM424 465h1v2h-1zM421 465h1v2h-1zM418 465h1v2h-1zM415 465h1v2h-1zM412 465h1v2h-1zM409 465h1v2h-1zM406 465h1v2h-1zM403 465h1v2h-1zM400 465h1v2h-1zM397 465h1v2h-1zM394 465h1v2h-1zM391 465h1v2h-1zM388 465h1v2h-1zM385 465h1v2h-1zM382 465h1v2h-1zM379 465h1v2h-1zM376 465h1v2h-1zM373 465h1v2h-1zM370 465h1v2h-1zM367 465h1v2h-1zM364 465h1v2h-1zM361 465h1v2h-1zM358 465h1v2h-1zM355 465h1v2h-1zM352 465h1v2h-1zM349 465h1v2h-1zM346 465h1v2h-1zM343 465h1v2h-1zM340 465h1v2h-1zM337 465h1v2h-1zM334 465h1v2h-1zM331 465h1v2h-1zM328 465h1v2h-1zM325 465h1v2h-1zM322 465h1v2h-1zM319 465h1v2h-1zM316 465h1v2h-1zM313 465h1v2h-1zM310 465h1v2h-1zM307 465h1v2h-1zM304 465h1v2h-1zM301 465h1v2h-1zM298 465h1v2h-1zM295 465h1v2h-1zM292 465h1v2h-1z" fill="#3a3a3a"/>
<path d="M554 466h1v1h-1zM557 463h1v1h-1zM560 460h1v1h-1zM563 457h1v1h-1zM566 454h1v1h-1zM569 451h1v1h-1zM572 448h1v1h-1zM575 445h1v1h-1zM578 442h1v1h-1zM581 439h1v1h-1zM584 436h1v1h-1zM587 433h1v1h-1zM590 430h1v1h-1zM593 427h1v1h-1zM596 424h1v1h-1zM599 421h1v1h-1zM602 418h1v1h-1zM605 415h1v1h-1zM608 412h1v1h-1zM611 409h1v1h-1zM614 406h1v1h-1zM617 403h1v1h-1zM620 400h1v1h-1zM623 397h1v1h-1zM626 394h1v1h-1zM629 391h1v1h-1zM632 388h1v1h-1zM635 385h1v1h-1zM638 382h1v1h-1zM641 379h1v1h-1zM644 376h1v1h-1zM647 373h1v1h-1zM650 370h1v1h-1zM653 367h1v1h-1zM656 364h1v1h-1zM659 361h1v1h-1zM662 358h1v1h-1zM665 355h1v1h-1zM668 352h1v1h-1zM671 349h1v1h-1zM674 346h1v1h-1zM677 343h1v1h-1zM680 340h1v1h-1zM683 337h1v1h-1zM686 334h1v1h-1zM689 331h1v1h-1zM692 328h1v1h-1zM695 325h1v1h-1zM698 322h1v1h-1zM701 319h1v1h-1zM704 316h1v1h-1zM707 313h1v1h-1zM710 310h1v1h-1zM713 307h1v1h-1zM716 304h1v1h-1zM719 301h1v1h-1zM722 298h1v1h-1zM725 295h1v1h-1zM728 292h1v1h-1zM731 289h1v1h-1zM734 286h1v1h-1zM737 283h1v1h-1zM554 466h1v1h-1zM557 469h1v1h-1zM560 472h1v1h-1zM563 475h1v1h-1zM566 478h1v1h-1zM569 481h1v1h-1zM572 484h1v1h-1zM575 487h1v1h-1zM578 490h1v1h-1zM581 493h1v1h-1zM584 496h1v1h-1zM587 499h1v1h-1zM590 502h1v1h-1zM593 505h1v1h-1zM596 508h1v1h-1zM599 511h1v1h-1zM602 514h1v1h-1zM605 517h1v1h-1zM608 520h1v1h-1zM611 523h1v1h-1zM614 526h1v1h-1zM617 529h1v1h-1zM620 532h1v1h-1zM623 535h1v1h-1zM626 538h1v1h-1zM629 541h1v1h-1zM632 544h1v1h-1zM635 547h1v1h-1zM638 550h1v1h-1zM641 553h1v1h-1zM644 556h1v1h-1zM647 559h1v1h-1zM650 562h1v1h-1zM653 565h1v1h-1zM656 568h1v1h-1zM659 571h1v1h-1zM662 574h1v1h-1zM665 577h1v1h-1zM668 580h1v1h-1zM671 583h1v1h-1zM674 586h1v1h-1zM677 589h1v1h-1zM680 592h1v1h-1zM683 595h1v1h-1zM686 598h1v1h-1zM689 601h1v1h-1zM692 604h1v1h-1zM695 607h1v1h-1zM698 610h1v1h-1zM701 613h1v1h-1zM704 616h1v1h-1zM707 619h1v1h-1zM710 622h1v1h-1zM713 625h1v1h-1zM716 628h1v1h-1zM719 631h1v1h-1zM722 634h1v1h-1zM725 637h1v1h-1zM728 640h1v1h-1zM731 643h1v1h-1zM734 646h1v1h-1zM737 649h1v1h-1zM554 466h1v1h-1zM551 469h1v1h-1zM548 472h1v1h-1zM545 475h1v1h-1zM542 478h1v1h-1zM539 481h1v1h-1zM536 484h1v1h-1zM533 487h1v1h-1zM530 490h1v1h-1zM527 493h1v1h-1zM524 496h1v1h-1zM521 499h1v1h-1zM518 502h1v1h-1zM515 505h1v1h-1zM512 508h1v1h-1zM509 511h1v1h-1zM506 514h1v1h-1zM503 517h1v1h-1zM500 520h1v1h-1zM497 523h1v1h-1zM494 526h1v1h-1zM491 529h1v1h-1zM488 532h1v1h-1zM485 535h1v1h-1zM482 538h1v1h-1zM479 541h1v1h-1zM476 544h1v1h-1zM473 547h1v1h-1zM470 550h1v1h-1zM467 553h1v1h-1zM464 556h1v1h-1zM461 559h1v1h-1zM458 562h1v1h-1zM455 565h1v1h-1zM452 568h1v1h-1zM449 571h1v1h-1zM446 574h1v1h-1zM443 577h1v1h-1zM440 580h1v1h-1zM437 583h1v1h-1zM434 586h1v1h-1zM431 589h1v1h-1zM428 592h1v1h-1zM425 595h1v1h-1zM422 598h1v1h-1zM419 601h1v1h-1zM416 604h1v1h-1zM413 607h1v1h-1zM410 610h1v1h-1zM407 613h1v1h-1zM404 616h1v1h-1zM401 619h1v1h-1zM398 622h1v1h-1zM395 625h1v1h-1zM392 628h1v1h-1zM389 631h1v1h-1zM386 634h1v1h-1zM383 637h1v1h-1zM380 640h1v1h-1zM377 643h1v1h-1zM374 646h1v1h-1zM371 649h1v1h-1zM554 466h1v1h-1zM551 463h1v1h-1zM548 460h1v1h-1zM545 457h1v1h-1zM542 454h1v1h-1zM539 451h1v1h-1zM536 448h1v1h-1zM533 445h1v1h-1zM530 442h1v1h-1zM527 439h1v1h-1zM524 436h1v1h-1zM521 433h1v1h-1zM518 430h1v1h-1zM515 427h1v1h-1zM512 424h1v1h-1zM509 421h1v1h-1zM506 418h1v1h-1zM503 415h1v1h-1zM500 412h1v1h-1zM497 409h1v1h-1zM494 406h1v1h-1zM491 403h1v1h-1zM488 400h1v1h-1zM485 397h1v1h-1zM482 394h1v1h-1zM479 391h1v1h-1zM476 388h1v1h-1zM473 385h1v1h-1zM470 382h1v1h-1zM467 379h1v1h-1zM464 376h1v1h-1zM461 373h1v1h-1zM458 370h1v1h-1zM455 367h1v1h-1zM452 364h1v1h-1zM449 361h1v1h-1zM446 358h1v1h-1zM443 355h1v1h-1zM440 352h1v1h-1zM437 349h1v1h-1zM434 346h1v1h-1zM431 343h1v1h-1zM428 340h1v1h-1zM425 337h1v1h-1zM422 334h1v1h-1zM419 331h1v1h-1zM416 328h1v1h-1zM413 325h1v1h-1zM410 322h1v1h-1zM407 319h1v1h-1zM404 316h1v1h-1zM401 313h1v1h-1zM398 310h1v1h-1zM395 307h1v1h-1zM392 304h1v1h-1zM389 301h1v1h-1zM386 298h1v1h-1zM383 295h1v1h-1zM380 292h1v1h-1zM377 289h1v1h-1zM374 286h1v1h-1zM371 283h1v1h-1z" fill="#4a4a4a"/>
<circle cx="554.0" cy="466.0" r="264.0" fill="none" stroke="#1a1a1a" stroke-width="1.15"/>
<g font-family="Liberation Sans" font-size="9" text-anchor="middle" fill="#000">
<text x="554.0" y="197.5">0°</text>
<text x="748.7" y="277.1">45°</text>
<text x="829.3" y="469.2">90°</text>
<text x="750.4" y="661.4">135°</text>
<text x="554.0" y="741.0">180°</text>
<text x="357.6" y="661.4">225°</text>
<text x="276.2" y="469.3">270°</text>
<text x="357.6" y="277.1">315°</text>
</g>
<g font-family="Liberation Sans" font-size="11" text-anchor="middle" fill="#000">
<text x="554.0" y="480.6">0</text>
<text x="614.9" y="480.6">20</text>
<text x="675.7" y="480.6">40</text>
<text x="736.6" y="480.6">60</text>
<text x="797.4" y="480.6">80</text>
</g>
</svg>
<div class="a" style="left:248px;top:867px;width:170px;height:3px;background:#f0f0f0"></div>
<div class="a" style="left:514px;top:867px;width:347px;height:3px;background:#f0f0f0"></div>
</body></html>
